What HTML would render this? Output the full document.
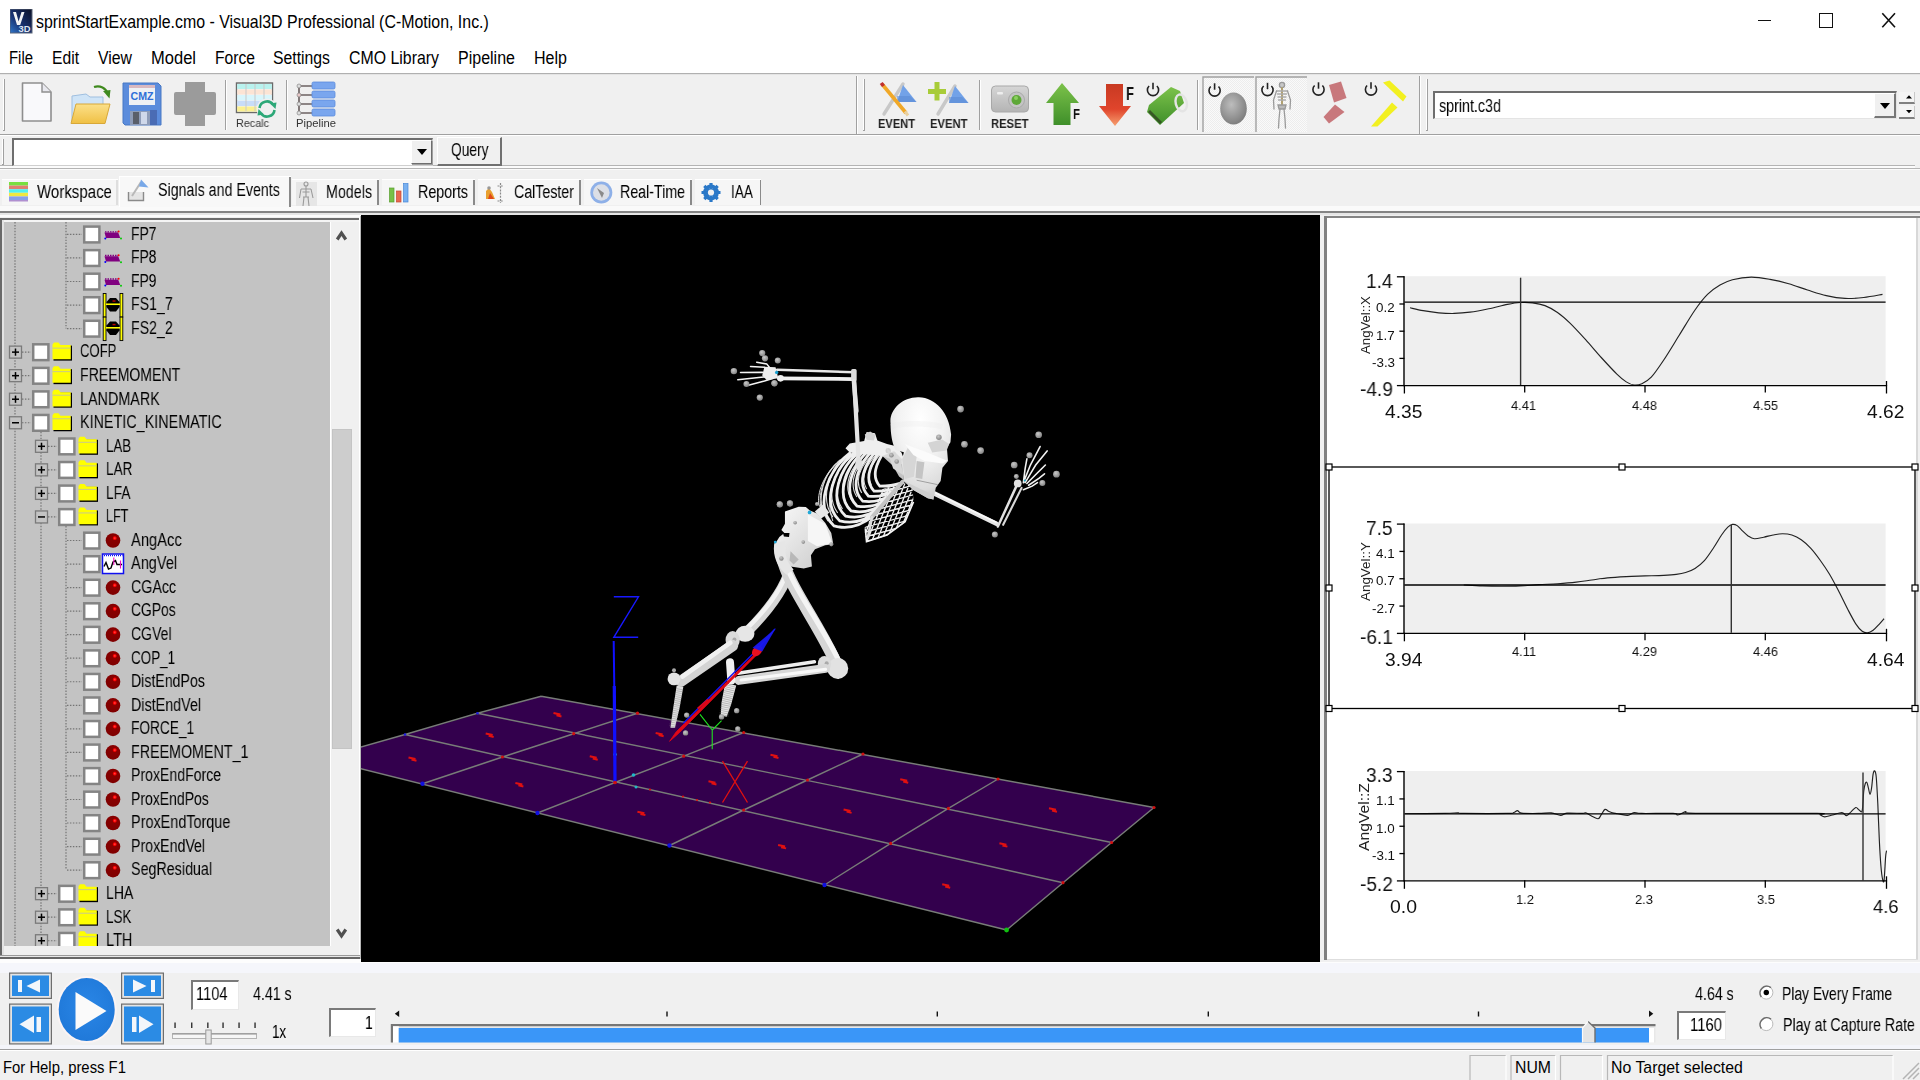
<!DOCTYPE html>
<html><head><meta charset="utf-8"><title>Visual3D</title>
<style>
html,body{margin:0;padding:0;}
body{width:1920px;height:1080px;position:relative;overflow:hidden;background:#f0f0f0;font-family:"Liberation Sans",sans-serif;}
div,span.t,svg{position:absolute;}
div{box-sizing:border-box;}
span.t{will-change:transform;white-space:pre;transform-origin:0 0;display:block;}
</style></head><body>
<div style="left:0px;top:0px;width:1920px;height:73px;background:#fff;"></div>
<div style="left:0px;top:72.6px;width:1920px;height:1.6px;background:#b0b0b0;"></div>
<div style="left:0px;top:74.2px;width:1920px;height:1px;background:#e4e4e4;"></div>
<svg style="left:10px;top:9px" width="23" height="25" viewBox="0 0 23 25">
<defs><linearGradient id="ai" x1="0" y1="1" x2="1" y2="0"><stop offset="0" stop-color="#2f78cc"/><stop offset=".4" stop-color="#1a3474"/><stop offset="1" stop-color="#0c1024"/></linearGradient></defs>
<rect x="0" y="0" width="22" height="24" fill="url(#ai)" stroke="#5a6478" stroke-width="1"/>
<path d="M3 3 L6 3 L8.600 12.500 L11.500 3 L14.500 3 L10.200 16 L7 16 Z" fill="#f4f4f4"/>
<text x="8.5" y="22.5" font-family="Liberation Sans" font-weight="bold" font-size="9" fill="#dfe6f2" textLength="12" lengthAdjust="spacingAndGlyphs">3D</text>
</svg>
<span class="t" style="left:36px;top:13.1px;font-size:18.02px;line-height:18.02px;transform:scaleX(0.8839);color:#000;will-change:auto;">sprintStartExample.cmo - Visual3D Professional (C-Motion, Inc.)</span>
<div style="left:1757.5px;top:19.5px;width:13.5px;height:1.6px;background:#111;"></div>
<div style="left:1819px;top:13px;width:13.6px;height:14.7px;border:1.6px solid #111;"></div>
<svg style="left:1880px;top:11px" width="18" height="18" viewBox="0 0 18 18"><path d="M2.300 2.200 L15 16.300 M15 2.200 L2.300 16.300" stroke="#111" stroke-width="1.600" fill="none"/></svg>
<span class="t" style="left:9px;top:49.1px;font-size:18.02px;line-height:18.02px;transform:scaleX(0.8264);color:#000;will-change:auto;">File</span>
<span class="t" style="left:52px;top:49.1px;font-size:18.02px;line-height:18.02px;transform:scaleX(0.8694);color:#000;will-change:auto;">Edit</span>
<span class="t" style="left:98px;top:49.1px;font-size:18.02px;line-height:18.02px;transform:scaleX(0.8776);color:#000;will-change:auto;">View</span>
<span class="t" style="left:151px;top:49.1px;font-size:18.02px;line-height:18.02px;transform:scaleX(0.9167);color:#000;will-change:auto;">Model</span>
<span class="t" style="left:215px;top:49.1px;font-size:18.02px;line-height:18.02px;transform:scaleX(0.8682);color:#000;will-change:auto;">Force</span>
<span class="t" style="left:273px;top:49.1px;font-size:18.02px;line-height:18.02px;transform:scaleX(0.8753);color:#000;will-change:auto;">Settings</span>
<span class="t" style="left:349px;top:49.1px;font-size:18.02px;line-height:18.02px;transform:scaleX(0.8811);color:#000;will-change:auto;">CMO Library</span>
<span class="t" style="left:458px;top:49.1px;font-size:18.02px;line-height:18.02px;transform:scaleX(0.8888);color:#000;will-change:auto;">Pipeline</span>
<span class="t" style="left:534px;top:49.1px;font-size:18.02px;line-height:18.02px;transform:scaleX(0.8903);color:#000;will-change:auto;">Help</span>
<div style="left:0px;top:134px;width:1920px;height:1px;background:#a0a0a0;"></div>
<div style="left:0px;top:135px;width:1920px;height:1px;background:#fff;"></div>
<div style="left:856px;top:76px;width:1px;height:58px;background:#a0a0a0;"></div>
<div style="left:857px;top:76px;width:1px;height:58px;background:#fff;"></div>
<div style="left:1419px;top:76px;width:1px;height:58px;background:#a0a0a0;"></div>
<div style="left:1420px;top:76px;width:1px;height:58px;background:#fff;"></div>
<div style="left:3px;top:79px;width:1px;height:52px;background:#fff;"></div>
<div style="left:4px;top:79px;width:1px;height:52px;background:#a0a0a0;"></div>
<div style="left:3px;top:130px;width:2px;height:1px;background:#a0a0a0;"></div>
<div style="left:863px;top:79px;width:1px;height:52px;background:#fff;"></div>
<div style="left:864px;top:79px;width:1px;height:52px;background:#a0a0a0;"></div>
<div style="left:863px;top:130px;width:2px;height:1px;background:#a0a0a0;"></div>
<div style="left:1426px;top:79px;width:1px;height:52px;background:#fff;"></div>
<div style="left:1427px;top:79px;width:1px;height:52px;background:#a0a0a0;"></div>
<div style="left:1426px;top:130px;width:2px;height:1px;background:#a0a0a0;"></div>
<div style="left:225px;top:80px;width:1px;height:50px;background:#a0a0a0;"></div>
<div style="left:226px;top:80px;width:1px;height:50px;background:#fff;"></div>
<div style="left:286px;top:80px;width:1px;height:50px;background:#a0a0a0;"></div>
<div style="left:287px;top:80px;width:1px;height:50px;background:#fff;"></div>
<div style="left:979px;top:80px;width:1px;height:50px;background:#a0a0a0;"></div>
<div style="left:980px;top:80px;width:1px;height:50px;background:#fff;"></div>
<div style="left:1197px;top:80px;width:1px;height:50px;background:#a0a0a0;"></div>
<div style="left:1198px;top:80px;width:1px;height:50px;background:#fff;"></div>
<svg style="left:0;top:75px" width="1920" height="60" viewBox="0 75 1920 60">
<defs>
<linearGradient id="gFold" x1="0" y1="0" x2="0" y2="1"><stop offset="0" stop-color="#fbe08a"/><stop offset="1" stop-color="#f0c044"/></linearGradient>
<linearGradient id="gGreen" x1="0" y1="0" x2="0" y2="1"><stop offset="0" stop-color="#7cc24a"/><stop offset="1" stop-color="#3f8f2a"/></linearGradient>
<linearGradient id="gRed" x1="0" y1="0" x2="0" y2="1"><stop offset="0" stop-color="#c83a22"/><stop offset=".6" stop-color="#e0452c"/><stop offset="1" stop-color="#f6a070"/></linearGradient>
<radialGradient id="gSph" cx=".42" cy=".38" r=".65"><stop offset="0" stop-color="#bdbdbd"/><stop offset="1" stop-color="#7c7c7c"/></radialGradient>
<linearGradient id="gCam" x1="0" y1="0" x2="0" y2="1"><stop offset="0" stop-color="#d6d6d6"/><stop offset="1" stop-color="#b4b4b4"/></linearGradient>
<pattern id="chk" width="2" height="2" patternUnits="userSpaceOnUse"><rect width="2" height="2" fill="#fafafa"/><rect width="1" height="1" fill="#ededed"/><rect x="1" y="1" width="1" height="1" fill="#ededed"/></pattern>
<g id="pwr"><path d="M-3.9 -4 A5.6 5.6 0 1 0 3.9 -4" fill="none" stroke="#222" stroke-width="1.6"/><path d="M0 -7.2 L0 -0.8" stroke="#222" stroke-width="1.6"/></g>
</defs>
<!-- new doc -->
<path d="M22.5 83 L42 83 L51 92 L51 121 L22.5 121 Z" fill="#f9f9fb" stroke="#8e8e8e" stroke-width="1.6" stroke-linejoin="round"/>
<path d="M42 83 L42 92 L51 92" fill="#e8e8ee" stroke="#8e8e8e" stroke-width="1.4"/>
<!-- open folder -->
<path d="M72 96 L86 94 L90 97 L103 97 L103 123 L72 123 Z" fill="#cfe4f7" stroke="#9fbfe0" stroke-width="1"/>
<path d="M76 104 L110 104 L105 123.5 L71 123.5 Z" fill="url(#gFold)" stroke="#d8a838" stroke-width="1"/>
<path d="M94 87 C100 85 106 88 108 94" fill="none" stroke="#3f8a1e" stroke-width="2.2"/>
<path d="M103 91 L110.5 90 L109.5 98.5 Z" fill="#3f8a1e"/>
<!-- save CMZ -->
<path d="M123 83 L158 83 L161 86 L161 125 L125 125 L123 123 Z" fill="#5b8cdc" stroke="#4878c4" stroke-width="1"/>
<rect x="129" y="85" width="26" height="20" fill="#eef0f4"/>
<rect x="129" y="85" width="26" height="3" fill="#d8b8c0"/>
<text x="130.5" y="100" font-family="Liberation Sans" font-weight="bold" font-size="10" fill="#2f6fd8" textLength="23" lengthAdjust="spacingAndGlyphs">CMZ</text>
<rect x="130" y="111" width="22" height="14" fill="#8e9cb8"/>
<rect x="133" y="112" width="6" height="12" fill="#5a5f6a"/><rect x="141" y="112" width="6" height="12" fill="#cfd8ea"/>
<rect x="150" y="110" width="7" height="15" fill="#4a6cb4"/>
<!-- gray plus -->
<path d="M185 82 L205 82 L205 92 L214 92 Q216 92 216 94 L216 113 Q216 115 214 115 L205 115 L205 126 L185 126 L185 115 L176 115 Q174 115 174 113 L174 94 Q174 92 176 92 L185 92 Z" fill="#9b9b9b"/>
<!-- recalc -->
<rect x="236.5" y="83" width="36" height="29.500" fill="#f4f4f4" stroke="#6a6a6a" stroke-width="1.400"/>
<rect x="237.200" y="84" width="34.600" height="5" fill="#b8f2ee"/><rect x="237.200" y="89.500" width="34.600" height="5" fill="#fce4d4"/><rect x="237.200" y="95" width="34.600" height="5.300" fill="#d8f6fc"/><rect x="237.200" y="100.800" width="34.600" height="5.200" fill="#c8dcf8"/><rect x="237.200" y="106.500" width="34.600" height="5" fill="#fbf090"/>
<path d="M246 84 L246 111 M255 84 L255 111 M264 84 L264 111" stroke="#c8c8c8" stroke-width="1"/>
<circle cx="267" cy="109" r="10.5" fill="#f0f0f0"/>
<path d="M259.5 108 A7.5 7.5 0 0 1 273 104.5" fill="none" stroke="#2da878" stroke-width="2.6"/><path d="M270 103.5 L276.5 102.5 L275.5 109 Z" fill="#2da878"/>
<path d="M274.5 110 A7.5 7.5 0 0 1 261 113.5" fill="none" stroke="#2da878" stroke-width="2.6"/><path d="M264 114.5 L257.5 115.5 L258.5 109 Z" fill="#2da878"/>
<!-- pipeline -->
<path d="M299 86 L299 113 M299 86 L312 86 M299 95 L312 95 M299 104 L312 104 M299 113 L312 113" stroke="#2a1a1a" stroke-width="1.100" fill="none"/>
<rect x="312" y="82" width="23" height="7" rx="1.5" fill="#7aa6ee" stroke="#5a8cdc" stroke-width=".8"/><rect x="312" y="91" width="23" height="7" rx="1.5" fill="#7aa6ee" stroke="#5a8cdc" stroke-width=".8"/><rect x="312" y="100" width="23" height="7" rx="1.5" fill="#7aa6ee" stroke="#5a8cdc" stroke-width=".8"/><rect x="312" y="109" width="23" height="7" rx="1.5" fill="#7aa6ee" stroke="#5a8cdc" stroke-width=".8"/>
<circle cx="299" cy="86" r="2" fill="#ddd" stroke="#888" stroke-width=".7"/><circle cx="299" cy="95" r="2" fill="#e8c8c8" stroke="#888" stroke-width=".7"/><circle cx="299" cy="104" r="2" fill="#ddd" stroke="#888" stroke-width=".7"/><circle cx="299" cy="113" r="2" fill="#ddd" stroke="#888" stroke-width=".7"/>
<!-- EVENT 1: flag + pencil -->
<path d="M884 114 L903 84" stroke="#c8c8c8" stroke-width="3.4" stroke-linecap="round"/>
<path d="M903 85 L916.5 102 L897 102 Z" fill="#72a2e8"/>
<path d="M897 96 L910 96 L916.5 102 L897 102 Z" fill="#5b8ad4" opacity=".6"/>
<path d="M882 84 L906 113" stroke="#f0a828" stroke-width="3.6"/>
<path d="M881.2 83 L883.5 86" stroke="#c03030" stroke-width="3.6"/>
<path d="M905 111.5 L908 115.5" stroke="#e8d0a0" stroke-width="3"/>
<!-- EVENT 2: plus + flag -->
<path d="M938 114 L955 86" stroke="#c8c8c8" stroke-width="3.4" stroke-linecap="round"/>
<path d="M955 86 L968.5 103 L949 103 Z" fill="#72a2e8"/>
<path d="M949 97 L962 97 L968.5 103 L949 103 Z" fill="#5b8ad4" opacity=".6"/>
<path d="M934.5 82 L939.5 82 L939.5 89 L946 89 L946 94 L939.5 94 L939.5 100.5 L934.5 100.5 L934.5 94 L928 94 L928 89 L934.5 89 Z" fill="#a8cc38"/>
<!-- RESET camera -->
<rect x="991.5" y="86" width="37" height="26" rx="4" fill="url(#gCam)" stroke="#a8a8a8" stroke-width="1"/>
<rect x="997" y="92" width="6" height="2.4" rx="1" fill="#eee"/>
<circle cx="1016.5" cy="100" r="8" fill="#c4c4c4" stroke="#aaa" stroke-width="1"/>
<circle cx="1016.5" cy="100" r="5" fill="#5ea838"/><circle cx="1016" cy="98" r="2" fill="#8cd060"/>
<!-- green up arrow -->
<path d="M1062 83 L1079 103 L1070.5 103 L1070.5 125 L1053.5 125 L1053.5 103 L1046 103 Z" fill="url(#gGreen)"/>
<!-- red down arrow -->
<path d="M1106 84 L1123 84 L1123 106 L1131 106 L1115 126 L1099 106 L1106 106 Z" fill="url(#gRed)"/>
<!-- green tag -->
<path d="M1171 87 L1180 91 L1184 103 L1160 125 L1147 112 L1149 105 Z" fill="url(#gGreen)"/>
<path d="M1160 124 L1148 112 L1150 110 L1162 122 Z" fill="#2c3a20" opacity=".7"/>
<ellipse cx="1181.500" cy="103" rx="5.500" ry="8.500" fill="none" stroke="#e4e4e4" stroke-width="2.400" transform="rotate(-15 1181 104)"/>
<use href="#pwr" x="1153" y="90"/>
<!-- pressed buttons -->
<rect x="1203" y="77" width="51" height="55" fill="url(#chk)"/><path d="M1203 132 L1203 77 L1254 77" fill="none" stroke="#a0a0a0" stroke-width="1.4"/>
<rect x="1256" y="77" width="51" height="55" fill="url(#chk)"/><path d="M1256 132 L1256 77 L1307 77" fill="none" stroke="#a0a0a0" stroke-width="1.4"/>
<ellipse cx="1233.5" cy="108.5" rx="13.3" ry="16" fill="url(#gSph)"/>
<use href="#pwr" x="1214.6" y="90.5"/>
<use href="#pwr" x="1267.5" y="90"/>
<!-- skeleton mini -->
<g stroke="#9a9a9a" fill="none" stroke-width="1.3" stroke-linecap="round">
<circle cx="1282" cy="85" r="2.6" fill="#c8c8c8" stroke="#999"/>
<path d="M1282 88 L1282 105" stroke="#b0a070" stroke-width="2"/>
<path d="M1276.500 91 L1287.500 91 M1277.500 94 L1286.500 94 M1278 97 L1286 97 M1278.500 100 L1285.500 100" stroke="#aaa"/>
<path d="M1276.500 91 L1273.500 100 L1274 109 M1287.500 91 L1290.500 100 L1290 109"/>
<path d="M1278 105 L1286 105 L1285 109 L1279 109 Z" fill="#bbb"/>
<path d="M1280 109 L1279 119 L1278.500 128 M1284 109 L1285 119 L1285.500 128"/>
</g>
<!-- red segments -->
<path d="M1329 85 L1341 81.500 L1346.500 98 L1334 102.500 Z" fill="#c8787c"/>
<path d="M1335 104.500 L1344.500 112 L1329 123.500 L1323.500 117 Z" fill="#c8787c"/>
<use href="#pwr" x="1318.500" y="89.500"/>
<!-- yellow chevron -->
<path d="M1383 82.500 L1389.500 80.500 L1406.500 96.500 L1403 101.500 Z" fill="#f2f020"/>
<path d="M1392 102.500 L1397.500 107.500 L1377.500 126.500 L1371 126.500 Z" fill="#f2f020"/>
<use href="#pwr" x="1371" y="89.500"/>
</svg>
<span class="t" style="left:236px;top:118.1px;font-size:11.05px;line-height:11.05px;transform:scaleX(0.9773);color:#333;">Recalc</span>
<span class="t" style="left:296px;top:118.1px;font-size:11.05px;line-height:11.05px;transform:scaleX(1.0177);color:#333;">Pipeline</span>
<span class="t" style="left:877.5px;top:118.1px;font-size:12.5px;line-height:12.5px;transform:scaleX(0.8878);color:#222;font-weight:bold;">EVENT</span>
<span class="t" style="left:930px;top:118.1px;font-size:12.5px;line-height:12.5px;transform:scaleX(0.8998);color:#222;font-weight:bold;">EVENT</span>
<span class="t" style="left:990.5px;top:118.1px;font-size:12.5px;line-height:12.5px;transform:scaleX(0.8998);color:#222;font-weight:bold;">RESET</span>
<span class="t" style="left:1073px;top:107.1px;font-size:14.53px;line-height:14.53px;transform:scaleX(0.7884);color:#111;font-weight:bold;">F</span>
<span class="t" style="left:1126px;top:85.1px;font-size:18.17px;line-height:18.17px;transform:scaleX(0.7208);color:#111;font-weight:bold;">F</span>
<div style="left:1433px;top:90.5px;width:464px;height:28px;background:#fff;border:1px solid #e4e4e4;border-top:2px solid #6e6e6e;border-left:2px solid #6e6e6e;"></div>
<div style="left:1873.5px;top:93px;width:22.5px;height:24.5px;background:#f0f0f0;border:1px solid #fff;border-right:2px solid #777;border-bottom:2px solid #777;"></div>
<svg style="left:1878.5px;top:101.5px" width="12" height="8"><path d="M1 1 L11 1 L6 7 Z" fill="#000"/></svg>
<span class="t" style="left:1439px;top:98.1px;font-size:17.73px;line-height:17.73px;transform:scaleX(0.8065);color:#000;">sprint.c3d</span>
<div style="left:1898.5px;top:91.5px;width:16.5px;height:12.5px;background:#f4f4f4;border-bottom:2px solid #808080;border-right:1px solid #c8c8c8;"></div>
<div style="left:1898.5px;top:105.5px;width:16.5px;height:13.5px;background:#f4f4f4;border-bottom:2px solid #808080;border-right:1px solid #c8c8c8;"></div>
<svg style="left:1904.5px;top:93px" width="8" height="24"><path d="M1 5.5 L7 5.5 L4 2.300 Z M1 17 L7 17 L4 20.200 Z" fill="#000"/></svg>
<div style="left:0px;top:165px;width:1915px;height:1px;background:#b4b4b4;"></div>
<div style="left:0px;top:166px;width:1915px;height:1.5px;background:#fbfbfb;"></div>
<div style="left:0px;top:167.8px;width:1920px;height:1px;background:#b4b4b4;"></div>
<div style="left:0px;top:168.8px;width:1920px;height:1px;background:#fbfbfb;"></div>
<div style="left:2px;top:139px;width:1px;height:26px;background:#fff;"></div>
<div style="left:3px;top:139px;width:1px;height:26px;background:#a0a0a0;"></div>
<div style="left:2px;top:164px;width:2px;height:1px;background:#a0a0a0;"></div>
<div style="left:12px;top:138px;width:421px;height:27.5px;background:#fff;border:1px solid #cfcfcf;border-top:2px solid #6e6e6e;border-left:2px solid #6e6e6e;"></div>
<div style="left:411px;top:140px;width:21px;height:23.5px;background:#f0f0f0;border:1px solid #fff;border-right:1px solid #6e6e6e;border-bottom:1px solid #6e6e6e;box-shadow:1px 1px 0 #a0a0a0;"></div>
<svg style="left:416px;top:148px" width="12" height="8"><path d="M1 1 L11 1 L6 7 Z" fill="#000"/></svg>
<div style="left:437px;top:137px;width:65px;height:28.5px;background:#f0f0f0;border:1px solid #fff;border-right:2px solid #707070;border-bottom:2px solid #707070;"></div>
<span class="t" style="left:450.5px;top:142.1px;font-size:17.88px;line-height:17.88px;transform:scaleX(0.7703);color:#000;">Query</span>
<div style="left:0px;top:205.5px;width:1920px;height:5px;background:#fafafa;"></div>
<div style="left:2px;top:178.5px;width:115.5px;height:26.5px;background:#f6f6f6;"></div>
<div style="left:2px;top:178.5px;width:115.5px;height:1px;background:#fff;"></div>
<div style="left:116px;top:179.5px;width:1.8px;height:25.5px;background:#dedede;"></div>
<div style="left:292px;top:178.5px;width:86.5px;height:26.5px;background:#f6f6f6;"></div>
<div style="left:292px;top:178.5px;width:86.5px;height:1px;background:#fff;"></div>
<div style="left:377px;top:179.5px;width:1.8px;height:25.5px;background:#8a8a8a;"></div>
<div style="left:382px;top:178.5px;width:92.5px;height:26.5px;background:#f6f6f6;"></div>
<div style="left:382px;top:178.5px;width:92.5px;height:1px;background:#fff;"></div>
<div style="left:473px;top:179.5px;width:1.8px;height:25.5px;background:#8a8a8a;"></div>
<div style="left:478px;top:178.5px;width:102.5px;height:26.5px;background:#f6f6f6;"></div>
<div style="left:478px;top:178.5px;width:102.5px;height:1px;background:#fff;"></div>
<div style="left:579px;top:179.5px;width:1.8px;height:25.5px;background:#8a8a8a;"></div>
<div style="left:584px;top:178.5px;width:107.5px;height:26.5px;background:#f6f6f6;"></div>
<div style="left:584px;top:178.5px;width:107.5px;height:1px;background:#fff;"></div>
<div style="left:690px;top:179.5px;width:1.8px;height:25.5px;background:#8a8a8a;"></div>
<div style="left:695px;top:178.5px;width:66px;height:26.5px;background:#f6f6f6;"></div>
<div style="left:695px;top:178.5px;width:66px;height:1px;background:#fff;"></div>
<div style="left:759.5px;top:179.5px;width:1.8px;height:25.5px;background:#8a8a8a;"></div>
<div style="left:119px;top:176px;width:171.5px;height:31px;background:#f8f8f8;"></div>
<div style="left:119px;top:176px;width:171.5px;height:1px;background:#fff;"></div>
<div style="left:119px;top:176px;width:1px;height:31px;background:#fff;"></div>
<div style="left:289px;top:177px;width:2px;height:30px;background:#8a8a8a;"></div>
<span class="t" style="left:37px;top:184.1px;font-size:17.88px;line-height:17.88px;transform:scaleX(0.8418);color:#000;">Workspace</span>
<span class="t" style="left:158px;top:182.1px;font-size:17.88px;line-height:17.88px;transform:scaleX(0.7971);color:#000;">Signals and Events</span>
<span class="t" style="left:326px;top:184.1px;font-size:17.88px;line-height:17.88px;transform:scaleX(0.7982);color:#000;">Models</span>
<span class="t" style="left:418px;top:184.1px;font-size:17.88px;line-height:17.88px;transform:scaleX(0.7987);color:#000;">Reports</span>
<span class="t" style="left:514px;top:184.1px;font-size:17.88px;line-height:17.88px;transform:scaleX(0.7946);color:#000;">CalTester</span>
<span class="t" style="left:620px;top:184.1px;font-size:17.88px;line-height:17.88px;transform:scaleX(0.7947);color:#000;">Real-Time</span>
<span class="t" style="left:731px;top:184.1px;font-size:17.88px;line-height:17.88px;transform:scaleX(0.7635);color:#000;">IAA</span>
<svg style="left:0;top:170px" width="800" height="40" viewBox="0 170 800 40">
<!-- workspace -->
<rect x="9" y="182" width="19" height="3.600" fill="#78e040"/><rect x="9" y="185.600" width="19" height="3.600" fill="#e08070"/><rect x="9" y="189.200" width="19" height="3.600" fill="#50f0f0"/><rect x="9" y="192.800" width="19" height="3.600" fill="#f0e840"/><rect x="9" y="196.400" width="19" height="3.600" fill="#88a0e8"/><rect x="9" y="200" width="19" height="1.500" fill="#b090d0"/>
<!-- signals -->
<path d="M128.500 192 L128.500 200.500 L143.500 200.500 L143.500 192" fill="#e4e4e4" stroke="#8a8a8a" stroke-width="1.4"/>
<path d="M132 196 L141 182" stroke="#b8b8b8" stroke-width="2"/>
<path d="M141 179.500 L148.500 187.500 L139 186.500 Z" fill="#78a8e8"/>
<!-- models -->
<rect x="296" y="182" width="21" height="24" fill="#e6e6e6"/>
<g stroke="#9a9a9a" stroke-width="1.100" fill="none"><circle cx="306" cy="184" r="2"/><path d="M306 186 L306 197 M301 189 L311 189 M301 189 L299.500 198 M311 189 L313 198 M303 197 L309 197 M304 197 L303 206 M308 197 L309 206 M302.500 192 L309.500 192"/></g>
<!-- reports -->
<rect x="389.500" y="188" width="4.500" height="14" fill="#78c048" stroke="#58a030" stroke-width=".7"/><rect x="396.500" y="191" width="4.500" height="11" fill="#e86850" stroke="#c84830" stroke-width=".7"/><rect x="403.500" y="183.500" width="4.500" height="18.500" fill="#78b0f0" stroke="#4888d8" stroke-width=".7"/>
<!-- caltester -->
<path d="M486 199 L486 191 L489 188 L492 192 L495 199 Z" fill="#e8a030"/><path d="M488 199 L490 193 L494 199 Z" fill="#e04818"/><circle cx="489" cy="188" r="1.800" fill="#999"/>
<path d="M500.500 183 L500.500 203 M497.500 186 L503.500 186 M497.500 201 L503.500 201" stroke="#8a8a8a" stroke-width="1.200" stroke-dasharray="2 1.200"/>
<!-- realtime -->
<circle cx="601.300" cy="192.500" r="11" fill="#8eb0e8"/><circle cx="601.300" cy="192.500" r="8.300" fill="#dcdfe6"/><path d="M597 188 L604 193 L602 198 Z" fill="#8a8a8a"/>
<!-- IAA gear -->
<g transform="translate(711,192.500)"><circle r="6.200" fill="none" stroke="#2a78c8" stroke-width="3.400"/><g stroke="#2a78c8" stroke-width="3.200"><path d="M0 -9.500 L0 9.500 M-9.500 0 L9.500 0 M-6.700 -6.700 L6.700 6.700 M-6.700 6.700 L6.700 -6.700"/></g><circle r="3.100" fill="#f0f0f0"/></g>
</svg>
<div style="left:0px;top:210.7px;width:1920px;height:2.8px;background:#848484;"></div>
<div style="left:0px;top:213px;width:1920px;height:2.5px;background:#e6e6e6;"></div>
<div style="left:0px;top:215px;width:361px;height:747px;background:#f0f0f0;"></div>
<div style="left:0px;top:215.3px;width:361px;height:2.2px;background:#fcfcfc;"></div>
<div style="left:0px;top:217.5px;width:360px;height:2.1px;background:#6c6c6c;"></div>
<div style="left:2px;top:219.6px;width:358px;height:2.4px;background:#f4f4f4;"></div>
<div style="left:0px;top:218px;width:2px;height:742px;background:#696969;"></div>
<div style="left:2px;top:220px;width:2px;height:736px;background:#e3e3e3;"></div>
<div style="left:359px;top:216px;width:1px;height:744px;background:#fff;"></div>
<div style="left:360px;top:216px;width:1px;height:744px;background:#b8b8b8;"></div>
<div style="left:0px;top:955px;width:360px;height:1px;background:#9a9a9a;"></div>
<div style="left:0px;top:956px;width:360px;height:1px;background:#e8e8e8;"></div>
<div style="left:0px;top:957px;width:360px;height:2px;background:#666;"></div>
<div style="left:0px;top:959px;width:361px;height:3px;background:#fdfdfd;"></div>
<div style="left:4px;top:222px;width:326px;height:724px;background:#c3c3c3;overflow:hidden">
<svg style="left:0;top:0" width="326" height="724" viewBox="4 222 326 724">
<defs>
<radialGradient id="gBall" cx=".62" cy=".34" r=".6"><stop offset="0" stop-color="#ff5050"/><stop offset=".15" stop-color="#ff0000"/><stop offset=".27" stop-color="#8a0000"/><stop offset="1" stop-color="#800000"/></radialGradient>
<g id="fold"><path d="M1.5 -6.5 L20 -6.5 L20 8.500 L1.500 8.500 Z" fill="#000"/><path d="M0.500 -7.500 L2 -9.500 L6.500 -9.500 L8.500 -7 L18.800 -7 L18.800 7.200 L0.500 7.200 Z" fill="#ffff00"/><path d="M0.500 -4 L18.500 -4" stroke="#c8c890" stroke-width="1"/></g>
<g id="plate"><path d="M1.500 -1.800 L15.200 -1.800 L17.200 3.600 L3 3.600 Z" fill="#800080"/><path d="M2 -2.500 L15 -2.500" stroke="#800080" stroke-width="1.400" stroke-dasharray="1.500 1"/><circle cx="15.600" cy="-2.800" r="1" fill="#f00"/><circle cx="2.300" cy="4" r="1" fill="#00f"/><circle cx="18" cy="4.200" r="1" fill="#0c0"/></g>
<g id="fs"><rect x="0.200" y="-11.500" width="2.800" height="23.500" fill="#ffff00" stroke="#000" stroke-width="0.900"/><rect x="17" y="-11.500" width="2.800" height="23.500" fill="#ffff00" stroke="#000" stroke-width="0.900"/><path d="M3.500 -3 L7 -7 L13 -7 L16.500 -3 L16.500 2 L13 6.500 L7 6.500 L3.500 2 Z" fill="#000"/><path d="M3 -0.800 L17 -0.800" stroke="#ffff00" stroke-width="1.600"/><path d="M9.500 -4 L12.500 -4" stroke="#c00000" stroke-width="1.400"/></g>
<g id="wave"><rect x="-0.500" y="-10" width="21" height="19.500" fill="#fff" stroke="#1010f0" stroke-width="1.500"/><path d="M1 -8.500 L19.500 -8.500" stroke="#1010f0" stroke-width="1.200" stroke-dasharray="1 1"/><path d="M1 2.500 L3 -1.500 L5.500 5 L8 4 L10 -2 L12.500 -3.500 L14 0.500 L19 0.500" fill="none" stroke="#000" stroke-width="1.400"/><path d="M10.800 -6.500 L10.800 1 M17.500 -3.500 L17.500 4.500" stroke="#f010c0" stroke-width="1.100"/></g>
</defs>
<path d="M15 222 L15 946" stroke="#747474" stroke-width="1.2" stroke-dasharray="1.47 1.47" fill="none"/>
<path d="M66 222 L66 328.58" stroke="#747474" stroke-width="1.2" stroke-dasharray="1.47 1.47" fill="none"/>
<path d="M41 431.76 L41 946" stroke="#747474" stroke-width="1.2" stroke-dasharray="1.47 1.47" fill="none"/>
<path d="M66 525.94 L66 870.12" stroke="#747474" stroke-width="1.2" stroke-dasharray="1.47 1.47" fill="none"/>
<path d="M67 234.4 L82 234.4" stroke="#747474" stroke-width="1.2" stroke-dasharray="1.47 1.47" fill="none"/>
<rect x="84.2" y="226.6" width="15.200" height="15.800" fill="#fff" stroke="#848484" stroke-width="2.500"/>
<use href="#plate" x="103" y="234.4"/>
<path d="M67 257.94 L82 257.94" stroke="#747474" stroke-width="1.2" stroke-dasharray="1.47 1.47" fill="none"/>
<rect x="84.2" y="250.14" width="15.200" height="15.800" fill="#fff" stroke="#848484" stroke-width="2.500"/>
<use href="#plate" x="103" y="257.94"/>
<path d="M67 281.49 L82 281.49" stroke="#747474" stroke-width="1.2" stroke-dasharray="1.47 1.47" fill="none"/>
<rect x="84.2" y="273.69" width="15.200" height="15.800" fill="#fff" stroke="#848484" stroke-width="2.500"/>
<use href="#plate" x="103" y="281.49"/>
<path d="M67 305.04 L82 305.04" stroke="#747474" stroke-width="1.2" stroke-dasharray="1.47 1.47" fill="none"/>
<rect x="84.2" y="297.24" width="15.200" height="15.800" fill="#fff" stroke="#848484" stroke-width="2.500"/>
<use href="#fs" x="103" y="305.04"/>
<path d="M67 328.58 L82 328.58" stroke="#747474" stroke-width="1.2" stroke-dasharray="1.47 1.47" fill="none"/>
<rect x="84.2" y="320.78" width="15.200" height="15.800" fill="#fff" stroke="#848484" stroke-width="2.500"/>
<use href="#fs" x="103" y="328.58"/>
<path d="M22 352.12 L31 352.12" stroke="#747474" stroke-width="1.2" stroke-dasharray="1.47 1.47" fill="none"/>
<rect x="9.5" y="346.12" width="12" height="12" fill="#c3c3c3" stroke="#7a7a7a" stroke-width="1.3"/>
<path d="M12 352.12 L19 352.12" stroke="#000" stroke-width="1.5"/>
<path d="M15.5 348.52 L15.5 355.73" stroke="#000" stroke-width="1.5"/>
<rect x="33.2" y="344.32" width="15.200" height="15.800" fill="#fff" stroke="#848484" stroke-width="2.500"/>
<use href="#fold" x="52" y="352.12"/>
<path d="M22 375.67 L31 375.67" stroke="#747474" stroke-width="1.2" stroke-dasharray="1.47 1.47" fill="none"/>
<rect x="9.5" y="369.67" width="12" height="12" fill="#c3c3c3" stroke="#7a7a7a" stroke-width="1.3"/>
<path d="M12 375.67 L19 375.67" stroke="#000" stroke-width="1.5"/>
<path d="M15.5 372.07 L15.5 379.27" stroke="#000" stroke-width="1.5"/>
<rect x="33.2" y="367.87" width="15.200" height="15.800" fill="#fff" stroke="#848484" stroke-width="2.500"/>
<use href="#fold" x="52" y="375.67"/>
<path d="M22 399.22 L31 399.22" stroke="#747474" stroke-width="1.2" stroke-dasharray="1.47 1.47" fill="none"/>
<rect x="9.5" y="393.22" width="12" height="12" fill="#c3c3c3" stroke="#7a7a7a" stroke-width="1.3"/>
<path d="M12 399.22 L19 399.22" stroke="#000" stroke-width="1.5"/>
<path d="M15.5 395.62 L15.5 402.82" stroke="#000" stroke-width="1.5"/>
<rect x="33.2" y="391.42" width="15.200" height="15.800" fill="#fff" stroke="#848484" stroke-width="2.500"/>
<use href="#fold" x="52" y="399.22"/>
<path d="M22 422.76 L31 422.76" stroke="#747474" stroke-width="1.2" stroke-dasharray="1.47 1.47" fill="none"/>
<rect x="9.5" y="416.76" width="12" height="12" fill="#c3c3c3" stroke="#7a7a7a" stroke-width="1.3"/>
<path d="M12 422.76 L19 422.76" stroke="#000" stroke-width="1.5"/>
<rect x="33.2" y="414.96" width="15.200" height="15.800" fill="#fff" stroke="#848484" stroke-width="2.500"/>
<use href="#fold" x="52" y="422.76"/>
<path d="M48 446.31 L57 446.31" stroke="#747474" stroke-width="1.2" stroke-dasharray="1.47 1.47" fill="none"/>
<rect x="35.5" y="440.31" width="12" height="12" fill="#c3c3c3" stroke="#7a7a7a" stroke-width="1.3"/>
<path d="M38 446.31 L45 446.31" stroke="#000" stroke-width="1.5"/>
<path d="M41.5 442.71 L41.5 449.91" stroke="#000" stroke-width="1.5"/>
<rect x="59.2" y="438.51" width="15.200" height="15.800" fill="#fff" stroke="#848484" stroke-width="2.500"/>
<use href="#fold" x="78" y="446.31"/>
<path d="M48 469.85 L57 469.85" stroke="#747474" stroke-width="1.2" stroke-dasharray="1.47 1.47" fill="none"/>
<rect x="35.5" y="463.85" width="12" height="12" fill="#c3c3c3" stroke="#7a7a7a" stroke-width="1.3"/>
<path d="M38 469.85 L45 469.85" stroke="#000" stroke-width="1.5"/>
<path d="M41.5 466.25 L41.5 473.45" stroke="#000" stroke-width="1.5"/>
<rect x="59.2" y="462.05" width="15.200" height="15.800" fill="#fff" stroke="#848484" stroke-width="2.500"/>
<use href="#fold" x="78" y="469.85"/>
<path d="M48 493.39 L57 493.39" stroke="#747474" stroke-width="1.2" stroke-dasharray="1.47 1.47" fill="none"/>
<rect x="35.5" y="487.39" width="12" height="12" fill="#c3c3c3" stroke="#7a7a7a" stroke-width="1.3"/>
<path d="M38 493.39 L45 493.39" stroke="#000" stroke-width="1.5"/>
<path d="M41.5 489.79 L41.5 497" stroke="#000" stroke-width="1.5"/>
<rect x="59.2" y="485.59" width="15.200" height="15.800" fill="#fff" stroke="#848484" stroke-width="2.500"/>
<use href="#fold" x="78" y="493.39"/>
<path d="M48 516.94 L57 516.94" stroke="#747474" stroke-width="1.2" stroke-dasharray="1.47 1.47" fill="none"/>
<rect x="35.5" y="510.94" width="12" height="12" fill="#c3c3c3" stroke="#7a7a7a" stroke-width="1.3"/>
<path d="M38 516.94 L45 516.94" stroke="#000" stroke-width="1.5"/>
<rect x="59.2" y="509.14" width="15.200" height="15.800" fill="#fff" stroke="#848484" stroke-width="2.500"/>
<use href="#fold" x="78" y="516.94"/>
<path d="M67 540.49 L82 540.49" stroke="#747474" stroke-width="1.2" stroke-dasharray="1.47 1.47" fill="none"/>
<rect x="84.2" y="532.69" width="15.200" height="15.800" fill="#fff" stroke="#848484" stroke-width="2.500"/>
<circle cx="113" cy="540.49" r="7.3" fill="url(#gBall)"/>
<path d="M67 564.03 L82 564.03" stroke="#747474" stroke-width="1.2" stroke-dasharray="1.47 1.47" fill="none"/>
<rect x="84.2" y="556.23" width="15.200" height="15.800" fill="#fff" stroke="#848484" stroke-width="2.500"/>
<use href="#wave" x="103" y="564.03"/>
<path d="M67 587.58 L82 587.58" stroke="#747474" stroke-width="1.2" stroke-dasharray="1.47 1.47" fill="none"/>
<rect x="84.2" y="579.78" width="15.200" height="15.800" fill="#fff" stroke="#848484" stroke-width="2.500"/>
<circle cx="113" cy="587.58" r="7.3" fill="url(#gBall)"/>
<path d="M67 611.12 L82 611.12" stroke="#747474" stroke-width="1.2" stroke-dasharray="1.47 1.47" fill="none"/>
<rect x="84.2" y="603.32" width="15.200" height="15.800" fill="#fff" stroke="#848484" stroke-width="2.500"/>
<circle cx="113" cy="611.12" r="7.3" fill="url(#gBall)"/>
<path d="M67 634.67 L82 634.67" stroke="#747474" stroke-width="1.2" stroke-dasharray="1.47 1.47" fill="none"/>
<rect x="84.2" y="626.87" width="15.200" height="15.800" fill="#fff" stroke="#848484" stroke-width="2.500"/>
<circle cx="113" cy="634.67" r="7.3" fill="url(#gBall)"/>
<path d="M67 658.21 L82 658.21" stroke="#747474" stroke-width="1.2" stroke-dasharray="1.47 1.47" fill="none"/>
<rect x="84.2" y="650.41" width="15.200" height="15.800" fill="#fff" stroke="#848484" stroke-width="2.500"/>
<circle cx="113" cy="658.21" r="7.3" fill="url(#gBall)"/>
<path d="M67 681.75 L82 681.75" stroke="#747474" stroke-width="1.2" stroke-dasharray="1.47 1.47" fill="none"/>
<rect x="84.2" y="673.96" width="15.200" height="15.800" fill="#fff" stroke="#848484" stroke-width="2.500"/>
<circle cx="113" cy="681.75" r="7.3" fill="url(#gBall)"/>
<path d="M67 705.3 L82 705.3" stroke="#747474" stroke-width="1.2" stroke-dasharray="1.47 1.47" fill="none"/>
<rect x="84.2" y="697.5" width="15.200" height="15.800" fill="#fff" stroke="#848484" stroke-width="2.500"/>
<circle cx="113" cy="705.3" r="7.3" fill="url(#gBall)"/>
<path d="M67 728.85 L82 728.85" stroke="#747474" stroke-width="1.2" stroke-dasharray="1.47 1.47" fill="none"/>
<rect x="84.2" y="721.05" width="15.200" height="15.800" fill="#fff" stroke="#848484" stroke-width="2.500"/>
<circle cx="113" cy="728.85" r="7.3" fill="url(#gBall)"/>
<path d="M67 752.39 L82 752.39" stroke="#747474" stroke-width="1.2" stroke-dasharray="1.47 1.47" fill="none"/>
<rect x="84.2" y="744.59" width="15.200" height="15.800" fill="#fff" stroke="#848484" stroke-width="2.500"/>
<circle cx="113" cy="752.39" r="7.3" fill="url(#gBall)"/>
<path d="M67 775.94 L82 775.94" stroke="#747474" stroke-width="1.2" stroke-dasharray="1.47 1.47" fill="none"/>
<rect x="84.2" y="768.14" width="15.200" height="15.800" fill="#fff" stroke="#848484" stroke-width="2.500"/>
<circle cx="113" cy="775.94" r="7.3" fill="url(#gBall)"/>
<path d="M67 799.48 L82 799.48" stroke="#747474" stroke-width="1.2" stroke-dasharray="1.47 1.47" fill="none"/>
<rect x="84.2" y="791.68" width="15.200" height="15.800" fill="#fff" stroke="#848484" stroke-width="2.500"/>
<circle cx="113" cy="799.48" r="7.3" fill="url(#gBall)"/>
<path d="M67 823.02 L82 823.02" stroke="#747474" stroke-width="1.2" stroke-dasharray="1.47 1.47" fill="none"/>
<rect x="84.2" y="815.23" width="15.200" height="15.800" fill="#fff" stroke="#848484" stroke-width="2.500"/>
<circle cx="113" cy="823.02" r="7.3" fill="url(#gBall)"/>
<path d="M67 846.57 L82 846.57" stroke="#747474" stroke-width="1.2" stroke-dasharray="1.47 1.47" fill="none"/>
<rect x="84.2" y="838.77" width="15.200" height="15.800" fill="#fff" stroke="#848484" stroke-width="2.500"/>
<circle cx="113" cy="846.57" r="7.3" fill="url(#gBall)"/>
<path d="M67 870.12 L82 870.12" stroke="#747474" stroke-width="1.2" stroke-dasharray="1.47 1.47" fill="none"/>
<rect x="84.2" y="862.32" width="15.200" height="15.800" fill="#fff" stroke="#848484" stroke-width="2.500"/>
<circle cx="113" cy="870.12" r="7.3" fill="url(#gBall)"/>
<path d="M48 893.66 L57 893.66" stroke="#747474" stroke-width="1.2" stroke-dasharray="1.47 1.47" fill="none"/>
<rect x="35.5" y="887.66" width="12" height="12" fill="#c3c3c3" stroke="#7a7a7a" stroke-width="1.3"/>
<path d="M38 893.66 L45 893.66" stroke="#000" stroke-width="1.5"/>
<path d="M41.5 890.06 L41.5 897.26" stroke="#000" stroke-width="1.5"/>
<rect x="59.2" y="885.86" width="15.200" height="15.800" fill="#fff" stroke="#848484" stroke-width="2.500"/>
<use href="#fold" x="78" y="893.66"/>
<path d="M48 917.21 L57 917.21" stroke="#747474" stroke-width="1.2" stroke-dasharray="1.47 1.47" fill="none"/>
<rect x="35.5" y="911.21" width="12" height="12" fill="#c3c3c3" stroke="#7a7a7a" stroke-width="1.3"/>
<path d="M38 917.21 L45 917.21" stroke="#000" stroke-width="1.5"/>
<path d="M41.5 913.61 L41.5 920.81" stroke="#000" stroke-width="1.5"/>
<rect x="59.2" y="909.41" width="15.200" height="15.800" fill="#fff" stroke="#848484" stroke-width="2.500"/>
<use href="#fold" x="78" y="917.21"/>
<path d="M48 940.75 L57 940.75" stroke="#747474" stroke-width="1.2" stroke-dasharray="1.47 1.47" fill="none"/>
<rect x="35.5" y="934.75" width="12" height="12" fill="#c3c3c3" stroke="#7a7a7a" stroke-width="1.3"/>
<path d="M38 940.75 L45 940.75" stroke="#000" stroke-width="1.5"/>
<path d="M41.5 937.15 L41.5 944.35" stroke="#000" stroke-width="1.5"/>
<rect x="59.2" y="932.95" width="15.200" height="15.800" fill="#fff" stroke="#848484" stroke-width="2.500"/>
<use href="#fold" x="78" y="940.75"/>
</svg>
<span class="t" style="left:126.9px;top:4.1px;font-size:17.44px;line-height:17.44px;transform:scaleX(0.7940);color:#000;">FP7</span>
<span class="t" style="left:126.9px;top:27.1px;font-size:17.44px;line-height:17.44px;transform:scaleX(0.7940);color:#000;">FP8</span>
<span class="t" style="left:126.9px;top:51.1px;font-size:17.44px;line-height:17.44px;transform:scaleX(0.7940);color:#000;">FP9</span>
<span class="t" style="left:126.9px;top:74.1px;font-size:17.44px;line-height:17.44px;transform:scaleX(0.8115);color:#000;">FS1_7</span>
<span class="t" style="left:126.9px;top:98.1px;font-size:17.44px;line-height:17.44px;transform:scaleX(0.8115);color:#000;">FS2_2</span>
<span class="t" style="left:76.2px;top:121.1px;font-size:17.44px;line-height:17.44px;transform:scaleX(0.7513);color:#000;">COFP</span>
<span class="t" style="left:76.2px;top:145.1px;font-size:17.44px;line-height:17.44px;transform:scaleX(0.8087);color:#000;">FREEMOMENT</span>
<span class="t" style="left:76.2px;top:169.1px;font-size:17.44px;line-height:17.44px;transform:scaleX(0.8234);color:#000;">LANDMARK</span>
<span class="t" style="left:76.2px;top:192.1px;font-size:17.44px;line-height:17.44px;transform:scaleX(0.8236);color:#000;">KINETIC_KINEMATIC</span>
<span class="t" style="left:101.6px;top:216.1px;font-size:17.44px;line-height:17.44px;transform:scaleX(0.7613);color:#000;">LAB</span>
<span class="t" style="left:101.6px;top:239.1px;font-size:17.44px;line-height:17.44px;transform:scaleX(0.7781);color:#000;">LAR</span>
<span class="t" style="left:101.6px;top:263.1px;font-size:17.44px;line-height:17.44px;transform:scaleX(0.7864);color:#000;">LFA</span>
<span class="t" style="left:101.6px;top:286.1px;font-size:17.44px;line-height:17.44px;transform:scaleX(0.7224);color:#000;">LFT</span>
<span class="t" style="left:126.9px;top:310.1px;font-size:17.44px;line-height:17.44px;transform:scaleX(0.8435);color:#000;">AngAcc</span>
<span class="t" style="left:126.9px;top:333.1px;font-size:17.44px;line-height:17.44px;transform:scaleX(0.8339);color:#000;">AngVel</span>
<span class="t" style="left:126.9px;top:357.1px;font-size:17.44px;line-height:17.44px;transform:scaleX(0.8165);color:#000;">CGAcc</span>
<span class="t" style="left:126.9px;top:380.1px;font-size:17.44px;line-height:17.44px;transform:scaleX(0.7933);color:#000;">CGPos</span>
<span class="t" style="left:126.9px;top:404.1px;font-size:17.44px;line-height:17.44px;transform:scaleX(0.8054);color:#000;">CGVel</span>
<span class="t" style="left:126.9px;top:428.1px;font-size:17.44px;line-height:17.44px;transform:scaleX(0.7710);color:#000;">COP_1</span>
<span class="t" style="left:126.9px;top:451.1px;font-size:17.44px;line-height:17.44px;transform:scaleX(0.8099);color:#000;">DistEndPos</span>
<span class="t" style="left:126.9px;top:475.1px;font-size:17.44px;line-height:17.44px;transform:scaleX(0.8216);color:#000;">DistEndVel</span>
<span class="t" style="left:126.9px;top:498.1px;font-size:17.44px;line-height:17.44px;transform:scaleX(0.7844);color:#000;">FORCE_1</span>
<span class="t" style="left:126.9px;top:522.1px;font-size:17.44px;line-height:17.44px;transform:scaleX(0.8192);color:#000;">FREEMOMENT_1</span>
<span class="t" style="left:126.9px;top:545.1px;font-size:17.44px;line-height:17.44px;transform:scaleX(0.8082);color:#000;">ProxEndForce</span>
<span class="t" style="left:126.9px;top:569.1px;font-size:17.44px;line-height:17.44px;transform:scaleX(0.8025);color:#000;">ProxEndPos</span>
<span class="t" style="left:126.9px;top:592.1px;font-size:17.44px;line-height:17.44px;transform:scaleX(0.8268);color:#000;">ProxEndTorque</span>
<span class="t" style="left:126.9px;top:616.1px;font-size:17.44px;line-height:17.44px;transform:scaleX(0.8130);color:#000;">ProxEndVel</span>
<span class="t" style="left:126.9px;top:639.1px;font-size:17.44px;line-height:17.44px;transform:scaleX(0.8200);color:#000;">SegResidual</span>
<span class="t" style="left:101.6px;top:663.1px;font-size:17.44px;line-height:17.44px;transform:scaleX(0.8046);color:#000;">LHA</span>
<span class="t" style="left:101.6px;top:687.1px;font-size:17.44px;line-height:17.44px;transform:scaleX(0.7704);color:#000;">LSK</span>
<span class="t" style="left:101.6px;top:710.1px;font-size:17.44px;line-height:17.44px;transform:scaleX(0.8340);color:#000;">LTH</span>
</div>
<div style="left:330px;top:222px;width:1px;height:724px;background:#fff;"></div>
<div style="left:331px;top:222px;width:28px;height:724px;background:#f0f0f0;"></div>
<div style="left:331.5px;top:429px;width:20px;height:320px;background:#cdcdcd;border:1px solid #c4c4c4;box-sizing:border-box;"></div>
<svg style="left:334px;top:229px" width="15" height="13"><path d="M3.200 10.500 L7.500 4.200 L11.800 10.500" fill="none" stroke="#505050" stroke-width="3.200"/></svg>
<svg style="left:334px;top:927px" width="15" height="13"><path d="M3.200 2.500 L7.500 8.800 L11.800 2.500" fill="none" stroke="#505050" stroke-width="3.200"/></svg>
<svg style="left:361px;top:215px;background:#000" width="959" height="747" viewBox="361 215 959 747">
<defs>
<linearGradient id="bone" x1="0" y1="0" x2="1" y2="1"><stop offset="0" stop-color="#fafafa"/><stop offset="1" stop-color="#c8c8c8"/></linearGradient>
<radialGradient id="skullg" cx=".5" cy=".22" r=".85"><stop offset="0" stop-color="#ffffff"/><stop offset=".45" stop-color="#f2f2f2"/><stop offset=".8" stop-color="#dcdcdc"/><stop offset="1" stop-color="#bcbcbc"/></radialGradient>
<radialGradient id="mk" cx=".4" cy=".35" r=".7"><stop offset="0" stop-color="#c8c8c8"/><stop offset="1" stop-color="#808080"/></radialGradient>
</defs>
<path d="M541.2 696.2 L1154 807.5 L1006.6 930 L320 758.5 Z" fill="#33004d"/>
<path d="M541.2 696.2 L1154 807.5 M477.5 713.2 L1111.6 842.5 M405 734.5 L1063 882.7 M320 758.5 L1006.6 930 M541.2 696.2 L477.5 713.2 L405 734.5 L320 758.5 M637.5 713.2 L573.7 733.7 L502.5 757 L422.5 783.7 M743.7 732.5 L683.7 756.2 L615 782.5 L537.5 813 M863 754 L807.5 780 L743.7 810 L669.5 845.5 M998 779 L948.4 808.4 L890.7 843.4 L824.5 885 M1154 807.5 L1111.6 842.5 L1063 882.7 L1006.6 930" fill="none" stroke="#787c78" stroke-width="1.45"/>
<path d="M553.48 713.08 l7 1.500 M556.48 715.28 l5 1.200" stroke="#e01010" stroke-width="2" fill="none"/>
<path d="M655.65 732.9 l7 1.500 M658.65 735.1 l5 1.200" stroke="#e01010" stroke-width="2" fill="none"/>
<path d="M770.48 754.67 l7 1.500 M773.48 756.88 l5 1.200" stroke="#e01010" stroke-width="2" fill="none"/>
<path d="M900.23 779.35 l7 1.500 M903.23 781.55 l5 1.200" stroke="#e01010" stroke-width="2" fill="none"/>
<path d="M1049 808.35 l7 1.500 M1052 810.55 l5 1.200" stroke="#e01010" stroke-width="2" fill="none"/>
<path d="M485.68 733.6 l7 1.500 M488.68 735.8 l5 1.200" stroke="#e01010" stroke-width="2" fill="none"/>
<path d="M589.73 756.35 l7 1.500 M592.73 758.55 l5 1.200" stroke="#e01010" stroke-width="2" fill="none"/>
<path d="M708.47 781.17 l7 1.500 M711.47 783.38 l5 1.200" stroke="#e01010" stroke-width="2" fill="none"/>
<path d="M843.58 809.45 l7 1.500 M846.58 811.65 l5 1.200" stroke="#e01010" stroke-width="2" fill="none"/>
<path d="M999.42 843.25 l7 1.500 M1002.42 845.45 l5 1.200" stroke="#e01010" stroke-width="2" fill="none"/>
<path d="M408.5 757.42 l7 1.500 M411.5 759.62 l5 1.200" stroke="#e01010" stroke-width="2" fill="none"/>
<path d="M515.38 783.05 l7 1.500 M518.38 785.25 l5 1.200" stroke="#e01010" stroke-width="2" fill="none"/>
<path d="M637.42 811.75 l7 1.500 M640.42 813.95 l5 1.200" stroke="#e01010" stroke-width="2" fill="none"/>
<path d="M778.1 844.98 l7 1.500 M781.1 847.18 l5 1.200" stroke="#e01010" stroke-width="2" fill="none"/>
<path d="M942.2 884.27 l7 1.500 M945.2 886.48 l5 1.200" stroke="#e01010" stroke-width="2" fill="none"/>
<circle cx="637.5" cy="713.2" r="1.600" fill="#d01010"/>
<circle cx="743.7" cy="732.5" r="1.600" fill="#d01010"/>
<circle cx="863" cy="754" r="1.600" fill="#d01010"/>
<circle cx="998" cy="779" r="1.600" fill="#d01010"/>
<circle cx="1154" cy="807.5" r="1.600" fill="#d01010"/>
<circle cx="573.7" cy="733.7" r="1.600" fill="#d01010"/>
<circle cx="683.7" cy="756.2" r="1.600" fill="#d01010"/>
<circle cx="807.5" cy="780" r="1.600" fill="#d01010"/>
<circle cx="948.4" cy="808.4" r="1.600" fill="#d01010"/>
<circle cx="1111.6" cy="842.5" r="1.600" fill="#d01010"/>
<circle cx="502.5" cy="757" r="1.600" fill="#d01010"/>
<circle cx="615" cy="782.5" r="1.600" fill="#d01010"/>
<circle cx="743.7" cy="810" r="1.600" fill="#d01010"/>
<circle cx="890.7" cy="843.4" r="1.600" fill="#d01010"/>
<circle cx="1063" cy="882.7" r="1.600" fill="#d01010"/>
<circle cx="422.5" cy="783.7" r="2.200" fill="#1010e0"/>
<circle cx="537.5" cy="813" r="2.200" fill="#1010e0"/>
<circle cx="669.5" cy="845.5" r="2.200" fill="#1010e0"/>
<circle cx="824.5" cy="885" r="2.200" fill="#1010e0"/>
<circle cx="1006.6" cy="930" r="2.400" fill="#10c010"/>
<circle cx="477.5" cy="713.2" r="1.300" fill="#2020e0"/>
<circle cx="405" cy="734.5" r="1.300" fill="#2020e0"/>
<circle cx="615" cy="754.500" r="1.800" fill="#20b8c8"/><circle cx="633.500" cy="775" r="1.800" fill="#20b8c8"/><circle cx="636" cy="787" r="1.500" fill="#20b8c8"/>
<circle cx="650" cy="789.500" r="1.100" fill="#e01010"/><circle cx="683" cy="796.500" r="1.100" fill="#e01010"/><circle cx="697" cy="800" r="1.100" fill="#e01010"/><circle cx="710" cy="802.500" r="1.100" fill="#e01010"/>
<path d="M613.800 596.800 L638.500 596.800 L613.800 637.300 L638.200 637.300" fill="none" stroke="#1818ff" stroke-width="1.400"/>
<path d="M613.700 641 L614.300 688" stroke="#1010ff" stroke-width="2"/>
<path d="M614.300 686 L615 782" stroke="#1010ff" stroke-width="3.200"/>
<circle cx="615" cy="782.500" r="1.800" fill="#d01010"/>
<path d="M722.500 761.200 L747.500 802.500 M747.500 761.200 L722.500 802.500" stroke="#e01010" stroke-width="1.300"/>

<!-- ===== legs (zoom origin 650,520 scale 4.5) ===== -->
<g transform="translate(650,520) scale(0.22222)">
 <!-- thigh A (down-left) -->
 <path d="M622 245 C590 330 520 420 440 500" stroke="#d6d6d6" stroke-width="46" stroke-linecap="round" fill="none"/>
 <path d="M612 245 C580 330 512 415 432 492" stroke="#f2f2f2" stroke-width="20" stroke-linecap="round" fill="none"/>
 <ellipse cx="428" cy="512" rx="42" ry="36" fill="#e6e6e6"/>
 <ellipse cx="372" cy="540" rx="32" ry="40" fill="#dadada"/>
 <circle cx="380" cy="538" r="9" fill="#a8a8a8"/>
 <!-- shank A -->
 <path d="M372 565 L140 725" stroke="#d4d4d4" stroke-width="50" stroke-linecap="round"/>
 <path d="M362 552 L146 705" stroke="#f0f0f0" stroke-width="20" stroke-linecap="round"/>
 <circle cx="108" cy="715" r="29" fill="#e4e4e4"/>
 <circle cx="108" cy="676" r="9" fill="#aaa"/>
 <!-- foot A -->
 <path d="M120 745 L150 750 L132 850 L112 935 L92 935 L104 850 Z" fill="#dedede"/>
 <path d="M135 760 L118 850 L100 935" stroke="#888" stroke-width="30" stroke-dasharray="3 6" opacity=".55" fill="none"/>
 <!-- thigh B (down-right) -->
 <path d="M600 190 C640 320 760 470 845 660" stroke="#d6d6d6" stroke-width="54" stroke-linecap="round" fill="none"/>
 <path d="M608 190 C652 320 772 470 853 640" stroke="#f4f4f4" stroke-width="22" stroke-linecap="round" fill="none"/>
 <circle cx="845" cy="668" r="47" fill="#e2e2e2"/>
 <ellipse cx="785" cy="648" rx="30" ry="36" fill="#dcdcdc"/>
 <circle cx="795" cy="645" r="9" fill="#aaa"/>
 <!-- shank B -->
 <path d="M790 668 L400 722" stroke="#d8d8d8" stroke-width="40" stroke-linecap="round"/>
 <path d="M740 638 L395 690" stroke="#eee" stroke-width="16" stroke-linecap="round"/>
 <path d="M790 672 L410 720" stroke="#f8f8f8" stroke-width="14" stroke-linecap="round"/>
 <path d="M360 640 L366 722" stroke="#f0f0f0" stroke-width="36" stroke-linecap="round"/>
 <!-- foot B -->
 <path d="M338 735 L388 745 L365 830 L345 885 L318 880 L322 820 Z" fill="#e4e4e4"/>
 <path d="M362 745 L344 820 L332 880" stroke="#777" stroke-width="44" stroke-dasharray="3 6" opacity=".5" fill="none"/>
 <!-- force vector -->
 <path d="M88 996 L118 953 L492 583 L498 589 L127 962 Z" fill="#e00818" stroke="#e00818" stroke-width="3.5" stroke-linejoin="round"/>
 <path d="M150 915 L324 741 L486 579 L562 490" stroke="#1414f0" stroke-width="6.5" fill="none"/>
 <ellipse cx="482" cy="590" rx="19" ry="27" fill="#e81020" transform="rotate(45 482 590)"/>
 <path d="M462 575 L567 486 L505 592 Z" fill="#1818f0" opacity=".95"/>
 <path d="M215 848 L262 808" stroke="#e00818" stroke-width="9"/>
 <!-- Y axis glyph -->
 <path d="M280 1032 L280 945 L225 875 M280 945 L322 903" fill="none" stroke="#20e020" stroke-width="5"/>
 <!-- markers -->
 <g fill="url(#mk)"><circle cx="165" cy="878" r="12"/><circle cx="160" cy="958" r="12"/><circle cx="390" cy="858" r="12"/><circle cx="395" cy="940" r="12"/><circle cx="322" cy="886" r="12"/></g>
</g>
<!-- ===== pelvis (zoom origin 760,480 scale 9.82) ===== -->
<g transform="translate(760,480) scale(0.10182)">
 <path d="M245 310 L380 262 L450 265 L490 300 L560 330 L640 420 L700 520 L720 630 L640 640 L540 680 L500 740 L510 850 L430 870 L300 850 L270 880 L230 800 L150 740 L140 640 L190 560 L240 520 L210 490 L245 430 Z" fill="url(#bone)"/>
 <path d="M470 340 L640 430 L710 620 L560 650 L470 600 Z" fill="#f6f6f6"/>
 <path d="M225 520 L290 520 L285 560 L235 555 Z" fill="#000"/>
 <path d="M300 700 L380 780 L330 830 L290 790 Z" fill="#b8b8b8"/>
 <path d="M140 620 C120 760 180 860 260 930 L330 880 C250 800 240 700 250 600 Z" fill="#e6e6e6"/>
 <circle cx="487" cy="318" r="18" fill="#20a8d8"/><circle cx="150" cy="610" r="14" fill="#20a8d8"/>
 <g fill="url(#mk)"><circle cx="195" cy="240" r="30"/><circle cx="295" cy="232" r="30"/><circle cx="210" cy="770" r="22"/><circle cx="345" cy="420" r="18"/><circle cx="425" cy="610" r="18"/><circle cx="700" cy="632" r="20"/><circle cx="560" cy="235" r="20"/></g>
</g>
<!-- ===== ribcage (zoom origin 810,420 scale 8.31) ===== -->
<g transform="translate(810,420) scale(0.12034)">
 <clipPath id="meshclip"><path d="M600 575 L760 520 L850 545 L862 680 L790 850 L640 960 L470 1015 L450 900 L520 800 Z"/></clipPath>
 <g clip-path="url(#meshclip)"><path d="M600 500 L380 1040 M640 500 L420 1040 M680 500 L460 1040 M720 500 L500 1040 M760 500 L540 1040 M800 500 L580 1040 M840 500 L620 1040 M880 500 L660 1040 M920 500 L700 1040 M960 500 L740 1040 M1000 500 L780 1040 M1040 500 L820 1040 M430 580 L900 450 M430 620 L900 490 M430 660 L900 530 M430 700 L900 570 M430 740 L900 610 M430 780 L900 650 M430 820 L900 690 M430 860 L900 730 M430 900 L900 770 M430 940 L900 810 M430 980 L900 850 M430 1020 L900 890 M430 1060 L900 930 M430 1100 L900 970" stroke="#f0f0f0" stroke-width="11" fill="none"/></g>
 <path d="M460 900 L470 1010 L640 955 L790 845 L860 680" stroke="#f4f4f4" stroke-width="14" fill="none"/>
 <!-- far ribs behind (thin, left mesh) -->
 <path d="M300 300 C120 420 40 620 110 800 M350 290 C190 420 120 640 190 840 M250 330 C90 470 50 650 80 720" stroke="#e6e6e6" stroke-width="8" fill="none"/>
 <path d="M300 300 C110 410 30 670 150 840 M333 296 C154 406 78 646 190 807 M367 292 C198 402 126 622 230 773 M400 288 C242 398 174 598 270 740 M433 284 C286 394 222 574 310 707 M467 281 C329 391 270 551 350 673 M500 277 C373 387 318 527 390 640 M533 273 C417 383 366 503 430 607 M567 269 C461 379 414 479 470 573 M600 265 C505 375 462 455 510 540" stroke="#dadada" stroke-width="9" fill="none"/>
 <path d="M330 275 C155 405 25 720 200 880 Q370 925 520 800 M368 271 C203 401 86 689 248 839 Q408 878 549 766 M405 266 C252 396 146 658 295 798 Q447 831 579 731 M442 262 C300 392 207 626 342 756 Q485 784 608 697 M480 258 C349 388 268 595 390 715 Q524 738 638 662 M518 253 C397 383 328 564 438 674 Q562 691 667 628 M555 249 C446 379 389 532 485 632 Q601 644 696 594 M592 244 C494 374 449 501 532 591 Q639 597 726 559 M630 240 C542 370 510 470 580 550 Q678 550 755 525" stroke="#eeeeee" stroke-width="23" fill="none" stroke-linecap="round"/>
 <!-- sternum -->
 <path d="M770 512 L515 808" stroke="#c4c4c4" stroke-width="34" stroke-linecap="round"/>
 <path d="M515 808 L480 980" stroke="#dcdcdc" stroke-width="22" stroke-linecap="round"/>
 <!-- shoulder girdle / scapula / vertebrae lumps -->
 <path d="M295 235 L330 195 L450 175 L470 100 L540 110 L560 170 L640 200 L700 215 L760 270 L790 350 L740 380 L690 330 L600 300 L520 290 L420 280 L330 270 Z" fill="#efefef"/>
 <path d="M455 120 L500 95 L545 125 L530 170 L470 165 Z" fill="#d4d4d4"/>
 <g fill="#cfcfcf"><circle cx="690" cy="290" r="26"/><circle cx="730" cy="345" r="26"/><circle cx="650" cy="255" r="22"/></g>
 <path d="M600 300 L700 260 L770 330 L780 500 L740 470 L690 380 Z" fill="#d8d8d8" opacity=".9"/>
 <!-- lower-left end of cage near pelvis -->
 <path d="M40 760 L110 700 L160 770 L90 820 Z" fill="#e8e8e8"/>
</g>
<!-- ===== upper body (zoom origin 770,370 scale 5.6833) ===== -->
<g transform="translate(770,370) scale(0.17595)">
 <!-- neck -->
 <path d="M660 440 L740 520 L760 600 L700 560 Z" fill="#d8d8d8"/>
 <!-- right arm (forward) -->
 <path d="M930 700 L1290 875" stroke="#e6e6e6" stroke-width="26" stroke-linecap="round"/>
 <path d="M935 697 L1285 865" stroke="#fafafa" stroke-width="9" stroke-linecap="round"/>
 <path d="M1295 890 L1405 650" stroke="#e2e2e2" stroke-width="14" stroke-linecap="round"/>
 <path d="M1325 880 L1430 670" stroke="#d8d8d8" stroke-width="12" stroke-linecap="round"/>
 <circle cx="1408" cy="645" r="22" fill="#e0e0e0"/>
 <g stroke="#f2f2f2" stroke-width="9" stroke-linecap="round" fill="none">
  <path d="M1440 640 L1480 540 L1535 435 M1450 640 L1510 540 L1575 460 M1460 645 L1525 580 L1565 540 M1470 655 L1530 615 L1560 590 M1440 640 L1450 560 L1460 505 M1440 680 L1490 660 L1520 640"/>
 </g>
 <circle cx="1448" cy="628" r="6" fill="#20b0d0"/>
 <!-- left arm humerus (upper part drawn in arm group) -->
 <path d="M478 60 L505 540" stroke="#e4e4e4" stroke-width="24" stroke-linecap="round"/>
 <ellipse cx="505" cy="535" rx="20" ry="38" fill="#e0e0e0"/>
 <!-- markers -->
 <g fill="url(#mk)"><circle cx="1083" cy="222" r="19"/><circle cx="1105" cy="422" r="19"/><circle cx="1197" cy="458" r="19"/><circle cx="1527" cy="368" r="19"/><circle cx="1475" cy="485" r="17"/><circle cx="1388" cy="540" r="19"/><circle cx="1628" cy="592" r="19"/><circle cx="1548" cy="642" r="17"/><circle cx="1400" cy="605" r="14"/><circle cx="1278" cy="935" r="17"/><circle cx="55" cy="763" r="17"/><circle cx="113" cy="757" r="17"/><circle cx="25" cy="75" r="17"/><circle cx="690" cy="485" r="13"/><circle cx="720" cy="520" r="13"/></g>
</g>
<!-- ===== skull (zoom origin 880,390 scale 9) ===== -->
<g transform="translate(880,390) scale(0.11111)">
 <path d="M95 300 C80 180 200 60 350 65 C500 70 620 200 640 400 L634 470 L602 520 L612 640 L562 700 L546 820 L502 880 L482 985 L430 975 L300 900 L215 820 L195 640 L215 560 L140 540 C110 480 95 400 95 300 Z" fill="url(#skullg)"/>
 <path d="M250 520 L330 600 L305 780 L222 800 L200 620 Z" fill="#d6d6d6"/>
 <path d="M430 475 L560 445 L622 485 L600 545 L470 562 Z" fill="#d4d4d4"/>
 <path d="M225 488 L420 560 L605 636 L565 662 L400 640 L300 585 Z" fill="#fbfbfb"/>
 <path d="M330 640 L400 650 L380 800 L320 790 Z" fill="#c4c4c4"/>
 <path d="M215 820 L300 900 L430 975 L482 985 L470 940 L300 860 Z" fill="#cfcfcf"/>
 <path d="M330 812 L520 852" stroke="#a0a0a0" stroke-width="9" fill="none"/>
 <path d="M100 330 C180 300 400 290 560 330" stroke="#e6e6e6" stroke-width="50" fill="none" opacity=".25"/>
 <circle cx="530" cy="425" r="25" fill="url(#mk)"/>
</g>
<!-- ===== left arm + hand (zoom origin 720,340 scale 9) ===== -->
<g transform="translate(720,340) scale(0.11111)">
 <path d="M515 268 L1205 290" stroke="#e8e8e8" stroke-width="24" stroke-linecap="round"/>
 <path d="M530 345 L1195 352" stroke="#f0f0f0" stroke-width="34" stroke-linecap="round"/>
 <circle cx="545" cy="345" r="30" fill="#f0f0f0"/>
 <rect x="1180" y="262" width="50" height="110" rx="14" fill="#dcdcdc"/>
 <path d="M1205 370 L1228 640" stroke="#e4e4e4" stroke-width="40" stroke-linecap="round"/>
 <g stroke="#f4f4f4" stroke-width="14" stroke-linecap="round" fill="none">
  <path d="M480 290 L420 215 L330 200 M475 300 L400 245 L275 238 M470 310 L380 290 L185 292 M470 325 L370 335 L160 358 M480 345 L400 370 L255 408"/>
 </g>
 <path d="M400 240 L500 245 L525 345 L420 360 L380 320 Z" fill="#ededed"/>
 <circle cx="510" cy="292" r="15" fill="#18a0d0"/>
 <g fill="url(#mk)"><circle cx="380" cy="118" r="28"/><circle cx="405" cy="165" r="28"/><circle cx="520" cy="185" r="27"/><circle cx="125" cy="280" r="29"/><circle cx="238" cy="395" r="27"/><circle cx="490" cy="390" r="28"/><circle cx="358" cy="518" r="28"/></g>
</g>

</svg>
<div style="left:1320px;top:215px;width:600px;height:747px;background:#f0f0f0;"></div>
<div style="left:1324px;top:215.5px;width:596px;height:2px;background:#858585;"></div>
<div style="left:1324px;top:215.5px;width:3px;height:744px;background:#808080;"></div>
<div style="left:1327px;top:217.5px;width:589px;height:741px;background:#fff;"></div>
<div style="left:1916px;top:217.5px;width:2px;height:742px;background:#d8d8d8;"></div>
<div style="left:1327px;top:958.5px;width:591px;height:1.5px;background:#dedede;"></div>
<svg style="left:1320px;top:215px" width="600" height="747" viewBox="1320 215 600 747">
<rect x="1404.4" y="276.2" width="481.2" height="108.8" fill="#efefef"/>
<path d="M1410 307.81 C1412.19 308.28 1418.33 309.79 1423.12 310.62 C1427.92 311.46 1433.54 312.34 1438.75 312.81 C1443.96 313.28 1449.17 313.54 1454.38 313.44 C1459.58 313.33 1464.27 312.97 1470 312.19 C1475.73 311.41 1482.5 310.05 1488.75 308.75 C1495 307.45 1502.29 305.42 1507.5 304.38 C1512.71 303.33 1515.83 302.76 1520 302.5 C1524.17 302.24 1528.33 302.29 1532.5 302.81 C1536.67 303.33 1540.83 304.01 1545 305.62 C1549.17 307.24 1553.33 309.58 1557.5 312.5 C1561.67 315.42 1565.31 318.59 1570 323.12 C1574.69 327.66 1580.42 333.96 1585.62 339.69 C1590.83 345.42 1596.04 351.77 1601.25 357.5 C1606.46 363.23 1612.71 370 1616.88 374.06 C1621.04 378.12 1623.39 380.05 1626.25 381.88 C1629.11 383.7 1631.46 384.69 1634.06 385 C1636.67 385.31 1639.01 385.05 1641.88 383.75 C1644.74 382.45 1647.6 381.15 1651.25 377.19 C1654.9 373.23 1659.06 367.03 1663.75 360 C1668.44 352.97 1674.17 343.33 1679.38 335 C1684.58 326.67 1690.31 316.77 1695 310 C1699.69 303.23 1703.33 298.54 1707.5 294.38 C1711.67 290.21 1715.83 287.45 1720 285 C1724.17 282.55 1727.29 280.99 1732.5 279.69 C1737.71 278.39 1745 277.24 1751.25 277.19 C1757.5 277.14 1763.75 278.28 1770 279.38 C1776.25 280.47 1782.5 281.98 1788.75 283.75 C1795 285.52 1801.25 288.02 1807.5 290 C1813.75 291.98 1820 294.22 1826.25 295.62 C1832.5 297.03 1838.75 298.12 1845 298.44 C1851.25 298.75 1857.5 298.18 1863.75 297.5 C1870 296.82 1879.38 294.9 1882.5 294.38" fill="none" stroke="#222" stroke-width="1.15"/>
<path d="M1404.4 302.2 L1885.6 302.2" stroke="#000" stroke-width="1.3"/>
<path d="M1520.6 277.7 L1520.6 385" stroke="#333" stroke-width="1.4"/>
<path d="M1404 276.2 L1404 385.6 L1887.1 385.6" fill="none" stroke="#000" stroke-width="1.4"/>
<path d="M1396.9 276.8 L1404.4 276.8" stroke="#000" stroke-width="1.3"/>
<path d="M1399.4 304 L1404.4 304" stroke="#000" stroke-width="1.3"/>
<path d="M1399.4 331.2 L1404.4 331.2" stroke="#000" stroke-width="1.3"/>
<path d="M1399.4 358.4 L1404.4 358.4" stroke="#000" stroke-width="1.3"/>
<path d="M1396.9 385.6 L1404.4 385.6" stroke="#000" stroke-width="1.3"/>
<path d="M1404.4 385 L1404.4 393.5" stroke="#000" stroke-width="1.3"/>
<path d="M1524.7 385 L1524.7 392.5" stroke="#000" stroke-width="1.3"/>
<path d="M1645 385 L1645 392.5" stroke="#000" stroke-width="1.3"/>
<path d="M1765.3 385 L1765.3 392.5" stroke="#000" stroke-width="1.3"/>
<path d="M1886.5 381 L1886.5 393.5" stroke="#000" stroke-width="1.3"/>
<rect x="1404.4" y="523.5" width="481.2" height="109.3" fill="#efefef"/>
<path d="M1463.75 585 C1466.88 585.16 1476.25 585.73 1482.5 585.94 C1488.75 586.15 1495 586.25 1501.25 586.25 C1507.5 586.25 1513.75 586.2 1520 585.94 C1526.25 585.68 1532.5 585.05 1538.75 584.69 C1545 584.32 1551.25 584.17 1557.5 583.75 C1563.75 583.33 1570.52 582.81 1576.25 582.19 C1581.98 581.56 1586.67 580.73 1591.88 580 C1597.08 579.27 1601.77 578.39 1607.5 577.81 C1613.23 577.24 1620 576.88 1626.25 576.56 C1632.5 576.25 1638.75 576.15 1645 575.94 C1651.25 575.73 1658.54 575.57 1663.75 575.31 C1668.96 575.05 1672.6 574.84 1676.25 574.38 C1679.9 573.91 1682.5 573.49 1685.62 572.5 C1688.75 571.51 1691.88 570.42 1695 568.44 C1698.12 566.46 1701.25 564.11 1704.38 560.62 C1707.5 557.14 1710.89 551.77 1713.75 547.5 C1716.61 543.23 1719.22 538.39 1721.56 535 C1723.91 531.61 1725.99 528.96 1727.81 527.19 C1729.64 525.42 1730.94 524.64 1732.5 524.38 C1734.06 524.11 1735.62 524.64 1737.19 525.62 C1738.75 526.61 1740.05 528.59 1741.88 530.31 C1743.7 532.03 1746.04 534.53 1748.12 535.94 C1750.21 537.34 1751.77 538.54 1754.38 538.75 C1756.98 538.96 1760.62 537.81 1763.75 537.19 C1766.88 536.56 1770 535.57 1773.12 535 C1776.25 534.43 1779.38 533.75 1782.5 533.75 C1785.62 533.75 1788.75 534.01 1791.88 535 C1795 535.99 1798.12 537.5 1801.25 539.69 C1804.38 541.88 1807.5 544.74 1810.62 548.12 C1813.75 551.51 1816.88 555.68 1820 560 C1823.12 564.32 1826.25 568.85 1829.38 574.06 C1832.5 579.27 1835.62 585.26 1838.75 591.25 C1841.88 597.24 1845.26 604.53 1848.12 610 C1850.99 615.47 1853.59 620.52 1855.94 624.06 C1858.28 627.6 1860.26 629.79 1862.19 631.25 C1864.11 632.71 1865.68 632.97 1867.5 632.81 C1869.32 632.66 1871.15 631.77 1873.12 630.31 C1875.1 628.85 1877.55 625.99 1879.38 624.06 C1881.2 622.14 1883.28 619.64 1884.06 618.75" fill="none" stroke="#222" stroke-width="1.15"/>
<path d="M1404.4 585 L1885.6 585" stroke="#000" stroke-width="1.3"/>
<path d="M1731.3 525 L1731.3 632.8" stroke="#333" stroke-width="1.4"/>
<path d="M1404 523.5 L1404 633.4 L1887.1 633.4" fill="none" stroke="#000" stroke-width="1.4"/>
<path d="M1396.9 524.1 L1404.4 524.1" stroke="#000" stroke-width="1.3"/>
<path d="M1399.4 551.43 L1404.4 551.43" stroke="#000" stroke-width="1.3"/>
<path d="M1399.4 578.75 L1404.4 578.75" stroke="#000" stroke-width="1.3"/>
<path d="M1399.4 606.07 L1404.4 606.07" stroke="#000" stroke-width="1.3"/>
<path d="M1396.9 633.4 L1404.4 633.4" stroke="#000" stroke-width="1.3"/>
<path d="M1404.4 632.8 L1404.4 641.3" stroke="#000" stroke-width="1.3"/>
<path d="M1524.7 632.8 L1524.7 640.3" stroke="#000" stroke-width="1.3"/>
<path d="M1645 632.8 L1645 640.3" stroke="#000" stroke-width="1.3"/>
<path d="M1765.3 632.8 L1765.3 640.3" stroke="#000" stroke-width="1.3"/>
<path d="M1886.5 628.8 L1886.5 641.3" stroke="#000" stroke-width="1.3"/>
<rect x="1404.4" y="771" width="481.2" height="109.3" fill="#efefef"/>
<path d="M1405 813.75 C1411.67 813.7 1436.25 813.59 1445 813.44 C1453.75 813.28 1454.38 812.81 1457.5 812.81 C1460.62 812.81 1455.42 813.33 1463.75 813.44 C1472.08 813.54 1499.17 813.59 1507.5 813.44 C1515.83 813.28 1512.08 812.97 1513.75 812.5 C1515.42 812.03 1516.2 810.52 1517.5 810.62 C1518.8 810.73 1518.02 812.66 1521.56 813.12 C1525.1 813.59 1533.8 813.49 1538.75 813.44 C1543.7 813.39 1547.6 812.5 1551.25 812.81 C1554.9 813.12 1558.02 815.26 1560.62 815.31 C1563.23 815.36 1563.23 813.44 1566.88 813.12 C1570.52 812.81 1579.38 813.49 1582.5 813.44 C1585.62 813.39 1584.06 812.34 1585.62 812.81 C1587.19 813.28 1589.79 815.26 1591.88 816.25 C1593.96 817.24 1596.56 819.01 1598.12 818.75 C1599.69 818.49 1600.1 816.25 1601.25 814.69 C1602.4 813.12 1603.7 809.9 1605 809.38 C1606.3 808.85 1607.6 810.94 1609.06 811.56 C1610.52 812.19 1611.93 812.71 1613.75 813.12 C1615.57 813.54 1617.66 813.7 1620 814.06 C1622.34 814.43 1625.47 815.57 1627.81 815.31 C1630.16 815.05 1631.72 812.81 1634.06 812.5 C1636.41 812.19 1635.36 813.28 1641.88 813.44 C1648.39 813.59 1667.14 813.18 1673.12 813.44 C1679.11 813.7 1675.73 815.31 1677.81 815 C1679.9 814.69 1683.8 811.88 1685.62 811.56 C1687.45 811.25 1681.98 812.81 1688.75 813.12 C1695.52 813.44 1704.9 813.39 1726.25 813.44 C1747.6 813.49 1801.25 813.23 1816.88 813.44 C1832.5 813.65 1818.7 814.11 1820 814.69 C1821.3 815.26 1822.6 816.82 1824.69 816.88 C1826.77 816.93 1829.64 815.73 1832.5 815 C1835.36 814.27 1839.53 812.4 1841.88 812.5 C1844.22 812.6 1845 815.78 1846.56 815.62 C1848.12 815.47 1849.69 812.92 1851.25 811.56 C1852.81 810.21 1854.64 807.76 1855.94 807.5 C1857.24 807.24 1858.02 809.48 1859.06 810 C1860.1 810.52 1861.41 813.75 1862.19 810.62 C1862.97 807.5 1863.23 795.78 1863.75 791.25 C1864.27 786.72 1864.79 784.9 1865.31 783.44 C1865.83 781.98 1866.35 781.72 1866.88 782.5 C1867.4 783.28 1867.92 786.15 1868.44 788.12 C1868.96 790.1 1869.48 794.38 1870 794.38 C1870.52 794.38 1871.04 791.51 1871.56 788.12 C1872.08 784.74 1872.6 776.93 1873.12 774.06 C1873.65 771.2 1874.17 770.42 1874.69 770.94 C1875.21 771.46 1875.73 771.72 1876.25 777.19 C1876.77 782.66 1877.29 793.07 1877.81 803.75 C1878.33 814.43 1878.85 830.83 1879.38 841.25 C1879.9 851.67 1880.42 860 1880.94 866.25 C1881.46 872.5 1881.98 876.41 1882.5 878.75 C1883.02 881.09 1883.54 883.96 1884.06 880.31 C1884.58 876.67 1885.21 861.82 1885.62 856.88 C1886.04 851.93 1886.41 851.67 1886.56 850.62" fill="none" stroke="#222" stroke-width="1.15"/>
<path d="M1404.4 813.8 L1885.6 813.8" stroke="#000" stroke-width="1.3"/>
<path d="M1863 772.5 L1863 880.3" stroke="#333" stroke-width="1.4"/>
<path d="M1404 771 L1404 880.9 L1887.1 880.9" fill="none" stroke="#000" stroke-width="1.4"/>
<path d="M1396.9 771.6 L1404.4 771.6" stroke="#000" stroke-width="1.3"/>
<path d="M1399.4 798.93 L1404.4 798.93" stroke="#000" stroke-width="1.3"/>
<path d="M1399.4 826.25 L1404.4 826.25" stroke="#000" stroke-width="1.3"/>
<path d="M1399.4 853.57 L1404.4 853.57" stroke="#000" stroke-width="1.3"/>
<path d="M1396.9 880.9 L1404.4 880.9" stroke="#000" stroke-width="1.3"/>
<path d="M1404.4 880.3 L1404.4 888.8" stroke="#000" stroke-width="1.3"/>
<path d="M1524.7 880.3 L1524.7 887.8" stroke="#000" stroke-width="1.3"/>
<path d="M1645 880.3 L1645 887.8" stroke="#000" stroke-width="1.3"/>
<path d="M1765.3 880.3 L1765.3 887.8" stroke="#000" stroke-width="1.3"/>
<path d="M1886.5 876.3 L1886.5 888.8" stroke="#000" stroke-width="1.3"/>
<rect x="1329" y="467" width="586" height="241.5" fill="none" stroke="#000" stroke-width="1.3"/>
<rect x="1326" y="464" width="6" height="6" fill="#fff" stroke="#000" stroke-width="1.2"/>
<rect x="1619" y="464" width="6" height="6" fill="#fff" stroke="#000" stroke-width="1.2"/>
<rect x="1912" y="464" width="6" height="6" fill="#fff" stroke="#000" stroke-width="1.2"/>
<rect x="1326" y="585" width="6" height="6" fill="#fff" stroke="#000" stroke-width="1.2"/>
<rect x="1912" y="585" width="6" height="6" fill="#fff" stroke="#000" stroke-width="1.2"/>
<rect x="1326" y="705.5" width="6" height="6" fill="#fff" stroke="#000" stroke-width="1.2"/>
<rect x="1619" y="705.5" width="6" height="6" fill="#fff" stroke="#000" stroke-width="1.2"/>
<rect x="1912" y="705.5" width="6" height="6" fill="#fff" stroke="#000" stroke-width="1.2"/>
</svg>
<span class="t" style="left:1366.31px;top:271.1px;font-size:20.06px;line-height:20.06px;transform:scaleX(0.9500);color:#111;">1.4</span>
<span class="t" style="left:1359.96px;top:379.1px;font-size:20.06px;line-height:20.06px;transform:scaleX(0.9500);color:#111;">-4.9</span>
<span class="t" style="left:1376.2px;top:301.1px;font-size:13.37px;line-height:13.37px;transform:scaleX(0.9900);color:#111;">0.2</span>
<span class="t" style="left:1376.2px;top:329.1px;font-size:13.37px;line-height:13.37px;transform:scaleX(0.9900);color:#111;">1.7</span>
<span class="t" style="left:1371.79px;top:356.1px;font-size:13.37px;line-height:13.37px;transform:scaleX(0.9900);color:#111;">-3.3</span>
<span class="t" style="left:1385px;top:402.1px;font-size:19.19px;line-height:19.19px;transform:scaleX(0.9908);color:#111;">4.35</span>
<span class="t" style="left:1867px;top:402.1px;font-size:19.19px;line-height:19.19px;transform:scaleX(0.9908);color:#111;">4.62</span>
<span class="t" style="left:1511.2px;top:399.1px;font-size:13.66px;line-height:13.66px;transform:scaleX(0.9400);color:#111;">4.41</span>
<span class="t" style="left:1631.5px;top:399.1px;font-size:13.66px;line-height:13.66px;transform:scaleX(0.9400);color:#111;">4.48</span>
<span class="t" style="left:1753px;top:399.1px;font-size:13.66px;line-height:13.66px;transform:scaleX(0.9400);color:#111;">4.55</span>
<span class="t" style="left:1360.23px;top:354px;font-size:12.06px;line-height:12.06px;color:#222;transform-origin:0 0;transform:rotate(-90deg) scaleX(1.0946)">AngVel::X</span>
<span class="t" style="left:1366.31px;top:518.1px;font-size:20.06px;line-height:20.06px;transform:scaleX(0.9500);color:#111;">7.5</span>
<span class="t" style="left:1359.96px;top:627.1px;font-size:20.06px;line-height:20.06px;transform:scaleX(0.9500);color:#111;">-6.1</span>
<span class="t" style="left:1376.2px;top:547.1px;font-size:13.37px;line-height:13.37px;transform:scaleX(0.9900);color:#111;">4.1</span>
<span class="t" style="left:1376.2px;top:574.1px;font-size:13.37px;line-height:13.37px;transform:scaleX(0.9900);color:#111;">0.7</span>
<span class="t" style="left:1371.79px;top:602.1px;font-size:13.37px;line-height:13.37px;transform:scaleX(0.9900);color:#111;">-2.7</span>
<span class="t" style="left:1385px;top:650.1px;font-size:19.19px;line-height:19.19px;transform:scaleX(0.9908);color:#111;">3.94</span>
<span class="t" style="left:1867px;top:650.1px;font-size:19.19px;line-height:19.19px;transform:scaleX(0.9908);color:#111;">4.64</span>
<span class="t" style="left:1511.68px;top:645.1px;font-size:13.66px;line-height:13.66px;transform:scaleX(0.9400);color:#111;">4.11</span>
<span class="t" style="left:1631.5px;top:645.1px;font-size:13.66px;line-height:13.66px;transform:scaleX(0.9400);color:#111;">4.29</span>
<span class="t" style="left:1753px;top:645.1px;font-size:13.66px;line-height:13.66px;transform:scaleX(0.9400);color:#111;">4.46</span>
<span class="t" style="left:1360.23px;top:601px;font-size:12.06px;line-height:12.06px;color:#222;transform-origin:0 0;transform:rotate(-90deg) scaleX(1.1135)">AngVel::Y</span>
<span class="t" style="left:1366.31px;top:765.1px;font-size:20.06px;line-height:20.06px;transform:scaleX(0.9500);color:#111;">3.3</span>
<span class="t" style="left:1359.96px;top:874.1px;font-size:20.06px;line-height:20.06px;transform:scaleX(0.9500);color:#111;">-5.2</span>
<span class="t" style="left:1376.2px;top:794.1px;font-size:13.37px;line-height:13.37px;transform:scaleX(0.9900);color:#111;">1.1</span>
<span class="t" style="left:1376.2px;top:822.1px;font-size:13.37px;line-height:13.37px;transform:scaleX(0.9900);color:#111;">1.0</span>
<span class="t" style="left:1371.79px;top:849.1px;font-size:13.37px;line-height:13.37px;transform:scaleX(0.9900);color:#111;">-3.1</span>
<span class="t" style="left:1390px;top:897.1px;font-size:19.19px;line-height:19.19px;transform:scaleX(1.0123);color:#111;">0.0</span>
<span class="t" style="left:1872.5px;top:897.1px;font-size:19.19px;line-height:19.19px;transform:scaleX(0.9561);color:#111;">4.6</span>
<span class="t" style="left:1515.77px;top:893.1px;font-size:13.66px;line-height:13.66px;transform:scaleX(0.9400);color:#111;">1.2</span>
<span class="t" style="left:1635.07px;top:893.1px;font-size:13.66px;line-height:13.66px;transform:scaleX(0.9400);color:#111;">2.3</span>
<span class="t" style="left:1756.57px;top:893.1px;font-size:13.66px;line-height:13.66px;transform:scaleX(0.9400);color:#111;">3.5</span>
<span class="t" style="left:1357.98px;top:851px;font-size:13.95px;line-height:13.95px;color:#222;transform-origin:0 0;transform:rotate(-90deg) scaleX(1.1239)">AngVel::Z</span>
<div style="left:0px;top:962px;width:1920px;height:11px;background:#f5f6fb;"></div>
<div style="left:0px;top:962px;width:1920px;height:1px;background:#fdfdfd;"></div>
<div style="left:0px;top:1044.5px;width:1920px;height:4.5px;background:#f4f5fa;"></div>
<div style="left:0px;top:1049px;width:1920px;height:1.2px;background:#a0a0a0;"></div>
<div style="left:0px;top:1050px;width:1920px;height:1px;background:#fff;"></div>
<svg style="left:0;top:962px" width="1920" height="118" viewBox="0 962 1920 118">
<defs><radialGradient id="gPlay" cx=".5" cy=".45" r=".6"><stop offset="0" stop-color="#2a86e6"/><stop offset="1" stop-color="#1f78d8"/></radialGradient></defs>
<rect x="9.6" y="973.1" width="41.8" height="25.3" fill="#e4e4e4" stroke="#6e6e6e" stroke-width="1.2"/>
<rect x="12" y="975.5" width="37" height="20.5" fill="#2b8be4"/>
<rect x="9.6" y="1004.1" width="41.8" height="39.8" fill="#e4e4e4" stroke="#6e6e6e" stroke-width="1.2"/>
<rect x="12" y="1006.5" width="37" height="35" fill="#2b8be4"/>
<rect x="121.6" y="973.1" width="41.8" height="25.3" fill="#e4e4e4" stroke="#6e6e6e" stroke-width="1.2"/>
<rect x="124" y="975.5" width="37" height="20.5" fill="#2b8be4"/>
<rect x="121.6" y="1004.1" width="41.8" height="39.8" fill="#e4e4e4" stroke="#6e6e6e" stroke-width="1.2"/>
<rect x="124" y="1006.5" width="37" height="35" fill="#2b8be4"/>
<rect x="18" y="980" width="4" height="12" fill="#f4f6fa"/><path d="M40 979.500 L40 992.500 L26.500 986 Z" fill="#f4f6fa"/>
<rect x="36.500" y="1017" width="4.500" height="15" fill="#f4f6fa"/><path d="M34 1015.500 L34 1033 L19.500 1024.300 Z" fill="#f4f6fa"/>
<rect x="151" y="980" width="4" height="12" fill="#f4f6fa"/><path d="M133 979.500 L133 992.500 L146.500 986 Z" fill="#f4f6fa"/>
<rect x="132" y="1017" width="4.500" height="15" fill="#f4f6fa"/><path d="M139 1015.500 L139 1033 L153.500 1024.300 Z" fill="#f4f6fa"/>
<ellipse cx="86.700" cy="1009.600" rx="30" ry="33.500" fill="#fbf4f4"/>
<ellipse cx="86.700" cy="1009.600" rx="28" ry="31.500" fill="url(#gPlay)"/>
<path d="M75.500 992 L75.500 1030 L106.500 1011 Z" fill="#fafafa"/>
<rect x="174.4" y="1022.500" width="1.300" height="5.500" fill="#222"/>
<rect x="191.1" y="1022.500" width="1.300" height="5.500" fill="#222"/>
<rect x="207.2" y="1022.500" width="1.300" height="5.500" fill="#222"/>
<rect x="222.4" y="1022.500" width="1.300" height="5.500" fill="#222"/>
<rect x="238.4" y="1022.500" width="1.300" height="5.500" fill="#222"/>
<rect x="254.4" y="1022.500" width="1.300" height="5.500" fill="#222"/>
<rect x="172.500" y="1033.500" width="84" height="5" fill="#f6f6f6" stroke="#b4b4b4" stroke-width="1"/>
<path d="M172.500 1034 L256.500 1034" stroke="#8c8c8c" stroke-width="1.200"/>
<rect x="205.800" y="1030" width="5.400" height="14" fill="#e6e6e6" stroke="#9a9a9a" stroke-width="1"/>
<rect x="391" y="1024.500" width="1264.500" height="18" fill="#e8e8e8"/>
<path d="M391.900 1042.500 L391.900 1025.200 L1655.500 1025.200" fill="none" stroke="#767676" stroke-width="2.200"/>
<rect x="393" y="1026.300" width="5.800" height="16.200" fill="#fff"/>
<rect x="398.700" y="1028" width="1250.300" height="14.500" fill="#3a96f8"/>
<path d="M1582.500 1042.500 L1582.500 1028 L1588 1021.500 L1595 1028 L1595 1042.500 Z" fill="#e4e4e4"/>
<path d="M1588 1021.500 L1595 1028 L1595 1042.500" fill="none" stroke="#6e6e6e" stroke-width="1.400"/>
<path d="M1582.500 1042.500 L1582.500 1028 L1588 1021.500" fill="none" stroke="#fafafa" stroke-width="1.200"/>
<rect x="1649" y="1028" width="5" height="14.500" fill="#fff"/>
<path d="M399.200 1010.500 L399.200 1017 L394.800 1013.700 Z" fill="#111"/>
<rect x="666.3" y="1011.500" width="1.400" height="5" fill="#111"/>
<rect x="936.6" y="1011.500" width="1.400" height="5" fill="#111"/>
<rect x="1207.6" y="1011.500" width="1.400" height="5" fill="#111"/>
<rect x="1477.8" y="1011.500" width="1.400" height="5" fill="#111"/>
<path d="M1649 1010.500 L1649 1017 L1653.300 1013.700 Z" fill="#111"/>
<circle cx="1766.300" cy="992.5" r="6.600" fill="#fff" stroke="#bbb" stroke-width="1"/>
<path d="M1761.300 997 A6.800 6.800 0 0 1 1771 987.7" fill="none" stroke="#6a6a6a" stroke-width="1.500"/>
<circle cx="1766.300" cy="992.5" r="2.700" fill="#000"/>
<circle cx="1766.300" cy="1024" r="6.600" fill="#fff" stroke="#bbb" stroke-width="1"/>
<path d="M1761.300 1028.5 A6.800 6.800 0 0 1 1771 1019.2" fill="none" stroke="#6a6a6a" stroke-width="1.500"/>
<path d="M1470 1080 L1470 1055.500 L1506 1055.500" fill="none" stroke="#b8b8b8" stroke-width="1.200"/>
<path d="M1506 1055.500 L1506 1080" fill="none" stroke="#fff" stroke-width="1.200"/>
<path d="M1511 1080 L1511 1055.500 L1555.5 1055.500" fill="none" stroke="#b8b8b8" stroke-width="1.200"/>
<path d="M1555.5 1055.500 L1555.5 1080" fill="none" stroke="#fff" stroke-width="1.200"/>
<path d="M1560.5 1080 L1560.5 1055.500 L1602.5 1055.500" fill="none" stroke="#b8b8b8" stroke-width="1.200"/>
<path d="M1602.5 1055.500 L1602.5 1080" fill="none" stroke="#fff" stroke-width="1.200"/>
<path d="M1607.5 1080 L1607.5 1055.500 L1893 1055.500" fill="none" stroke="#b8b8b8" stroke-width="1.200"/>
<path d="M1893 1055.500 L1893 1080" fill="none" stroke="#fff" stroke-width="1.200"/>
<path d="M1903 1079 L1919 1063 M1908 1079 L1919 1068 M1913 1079 L1919 1073" stroke="#b4b4b4" stroke-width="1.500"/>
</svg>
<div style="left:191px;top:980px;width:47.5px;height:29.5px;background:#fff;border:1px solid #e8e8e8;border-top:2px solid #7a7a7a;border-left:2px solid #7a7a7a;box-sizing:border-box"></div>
<div style="left:328.7px;top:1008px;width:47.8px;height:29px;background:#fff;border:1px solid #e8e8e8;border-top:2px solid #7a7a7a;border-left:2px solid #7a7a7a;box-sizing:border-box"></div>
<div style="left:1677px;top:1011px;width:48.5px;height:29px;background:#fff;border:1px solid #e8e8e8;border-top:2px solid #7a7a7a;border-left:2px solid #7a7a7a;box-sizing:border-box"></div>
<span class="t" style="left:196px;top:986.1px;font-size:17.59px;line-height:17.59px;transform:scaleX(0.8329);color:#000;">1104</span>
<span class="t" style="left:253px;top:986.1px;font-size:17.59px;line-height:17.59px;transform:scaleX(0.8078);color:#000;">4.41 s</span>
<span class="t" style="left:271.7px;top:1024.1px;font-size:17.59px;line-height:17.59px;transform:scaleX(0.7591);color:#000;">1x</span>
<span class="t" style="left:365.3px;top:1015.1px;font-size:17.59px;line-height:17.59px;transform:scaleX(0.7974);color:#000;">1</span>
<span class="t" style="left:1694.6px;top:986.1px;font-size:17.59px;line-height:17.59px;transform:scaleX(0.8099);color:#000;">4.64 s</span>
<span class="t" style="left:1690px;top:1017.1px;font-size:17.59px;line-height:17.59px;transform:scaleX(0.8461);color:#000;">1160</span>
<span class="t" style="left:1781.8px;top:986.1px;font-size:17.88px;line-height:17.88px;transform:scaleX(0.7757);color:#000;">Play Every Frame</span>
<span class="t" style="left:1783px;top:1017.1px;font-size:17.88px;line-height:17.88px;transform:scaleX(0.7954);color:#000;">Play at Capture Rate</span>
<span class="t" style="left:3px;top:1059.1px;font-size:17.15px;line-height:17.15px;transform:scaleX(0.8661);color:#000;will-change:auto;">For Help, press F1</span>
<span class="t" style="left:1515px;top:1059.1px;font-size:17.15px;line-height:17.15px;transform:scaleX(0.9217);color:#000;will-change:auto;">NUM</span>
<span class="t" style="left:1611px;top:1059.1px;font-size:17.15px;line-height:17.15px;transform:scaleX(0.9250);color:#000;will-change:auto;">No Target selected</span>
</body></html>
